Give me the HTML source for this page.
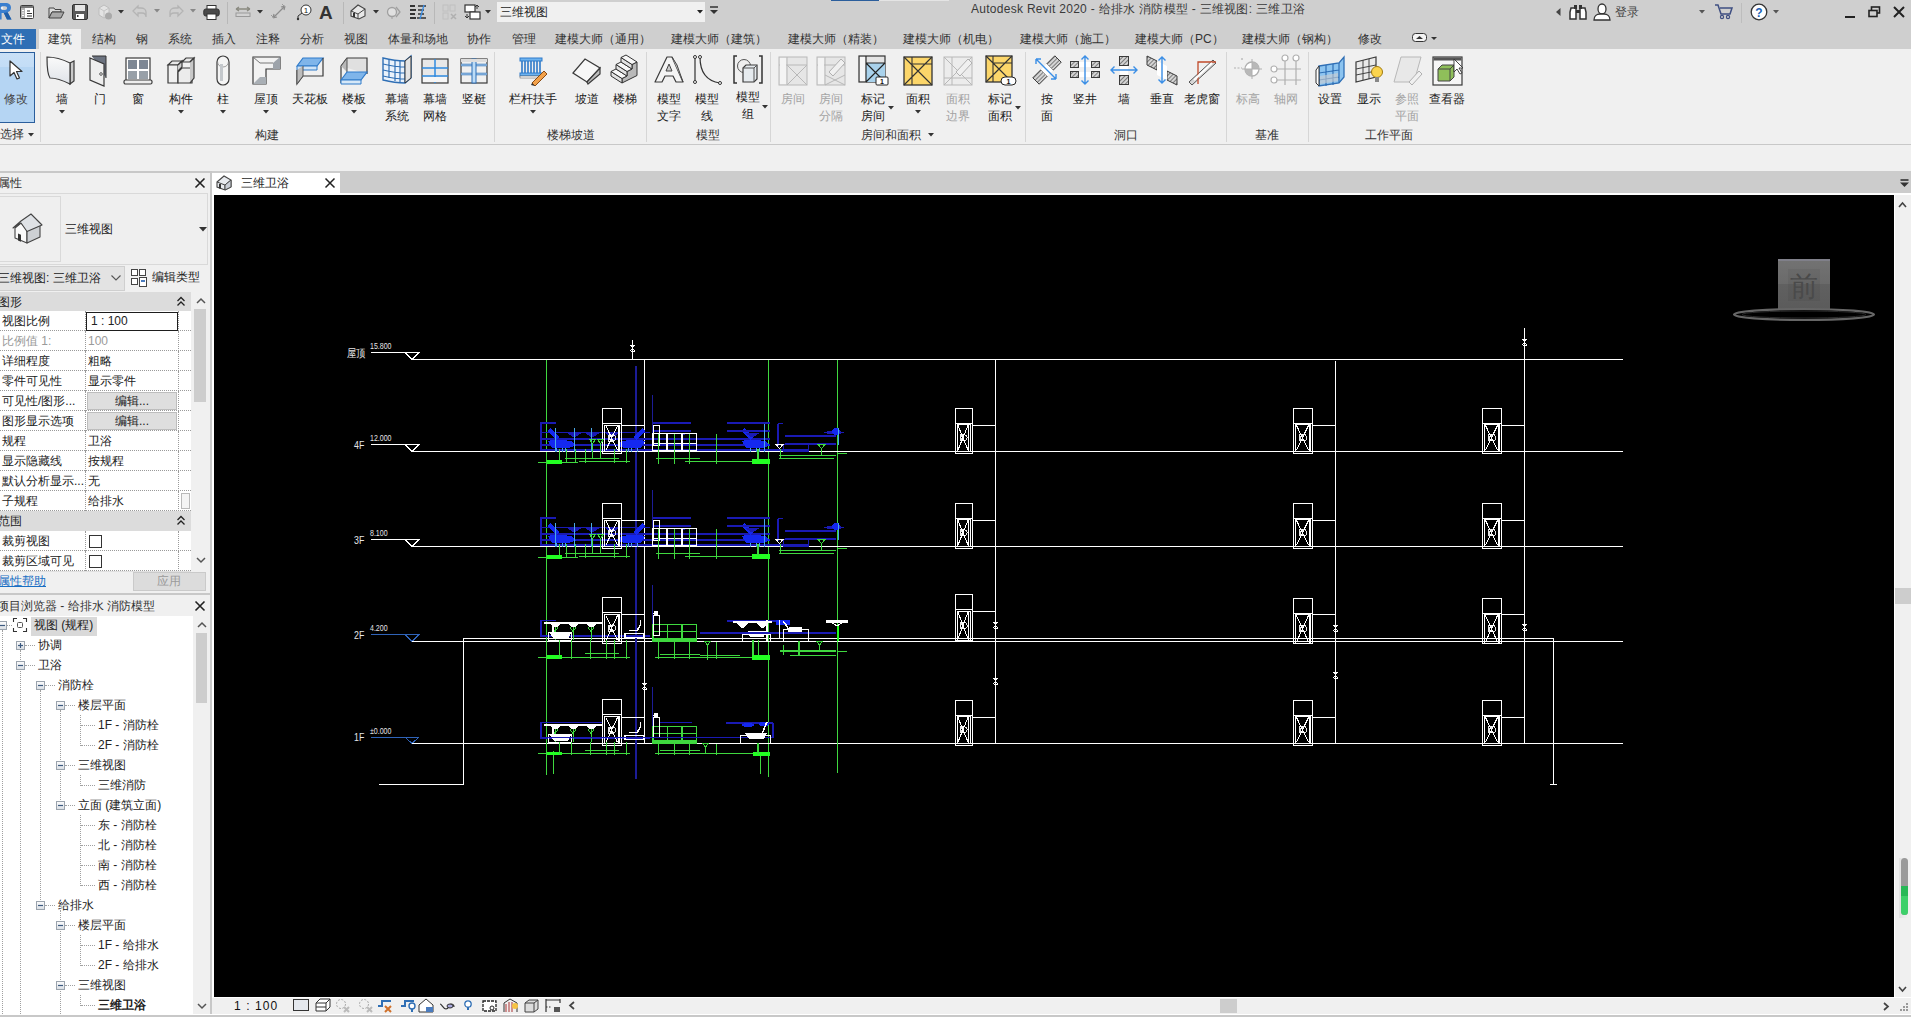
<!DOCTYPE html><html><head><meta charset="utf-8"><style>
html,body{margin:0;padding:0}
body{width:1911px;height:1017px;overflow:hidden;position:relative;background:#f0f0f0;font-family:"Liberation Sans",sans-serif;font-size:12px;color:#1e1e1e}
.t{position:absolute;white-space:nowrap}
svg{overflow:visible}
</style></head><body>
<div style="position:absolute;left:0px;top:0px;width:1911px;height:49px;background:#cfcfcf"></div>
<div style="position:absolute;left:0px;top:29px;width:36px;height:20px;background:#2f6fb5"></div>
<div class="t" style="left:1px;top:31.0px;font-size:12px;line-height:16px;color:#ffffff;">文件</div>
<div style="position:absolute;left:39px;top:29px;width:42px;height:20px;background:#f0f0f0"></div>
<div class="t" style="left:48px;top:31.0px;font-size:12px;line-height:16px;color:#333333;">建筑</div>
<div class="t" style="left:92px;top:31.0px;font-size:12px;line-height:16px;color:#333333;">结构</div>
<div class="t" style="left:136px;top:31.0px;font-size:12px;line-height:16px;color:#333333;">钢</div>
<div class="t" style="left:168px;top:31.0px;font-size:12px;line-height:16px;color:#333333;">系统</div>
<div class="t" style="left:212px;top:31.0px;font-size:12px;line-height:16px;color:#333333;">插入</div>
<div class="t" style="left:256px;top:31.0px;font-size:12px;line-height:16px;color:#333333;">注释</div>
<div class="t" style="left:300px;top:31.0px;font-size:12px;line-height:16px;color:#333333;">分析</div>
<div class="t" style="left:344px;top:31.0px;font-size:12px;line-height:16px;color:#333333;">视图</div>
<div class="t" style="left:388px;top:31.0px;font-size:12px;line-height:16px;color:#333333;">体量和场地</div>
<div class="t" style="left:467px;top:31.0px;font-size:12px;line-height:16px;color:#333333;">协作</div>
<div class="t" style="left:512px;top:31.0px;font-size:12px;line-height:16px;color:#333333;">管理</div>
<div class="t" style="left:555px;top:31.0px;font-size:12px;line-height:16px;color:#333333;">建模大师（通用）</div>
<div class="t" style="left:671px;top:31.0px;font-size:12px;line-height:16px;color:#333333;">建模大师（建筑）</div>
<div class="t" style="left:788px;top:31.0px;font-size:12px;line-height:16px;color:#333333;">建模大师（精装）</div>
<div class="t" style="left:903px;top:31.0px;font-size:12px;line-height:16px;color:#333333;">建模大师（机电）</div>
<div class="t" style="left:1020px;top:31.0px;font-size:12px;line-height:16px;color:#333333;">建模大师（施工）</div>
<div class="t" style="left:1135px;top:31.0px;font-size:12px;line-height:16px;color:#333333;">建模大师（PC）</div>
<div class="t" style="left:1242px;top:31.0px;font-size:12px;line-height:16px;color:#333333;">建模大师（钢构）</div>
<div class="t" style="left:1358px;top:31.0px;font-size:12px;line-height:16px;color:#333333;">修改</div>
<div style="position:absolute;left:831px;top:0px;width:48px;height:1px;background:#2b5e9c"></div>
<div style="position:absolute;left:879px;top:0px;width:70px;height:1px;background:#e4e4e4"></div>
<div class="t" style="left:971px;top:1.0px;font-size:12px;line-height:16px;color:#3a3a3a;letter-spacing:0.28px">Autodesk Revit 2020 - 给排水 消防模型 - 三维视图: 三维卫浴</div>
<svg style="position:absolute;left:-2px;top:3px;" width="14" height="17" viewBox="0 0 14 17"><path d="M0 0h7.5c3.5 0 5.5 2 5.5 4.8 0 2.3-1.4 3.9-3.4 4.5L13.5 16.5H9L5.8 10H3.6v6.5H0Z" fill="#3a7fcf"/><path d="M3.6 3.2v3.8h3.4c1.3 0 2.1-.7 2.1-1.9s-.8-1.9-2.1-1.9Z" fill="#cfcfcf"/><path d="M5.8 10L9 16.5h4.5L9.6 9.3Z" fill="#1f5ea8"/><circle cx="4" cy="5" r="1.3" fill="#e8f0fa"/></svg>
<svg style="position:absolute;left:20px;top:5px;" width="15" height="15" viewBox="0 0 15 15"><rect x="0.5" y="0.5" width="13" height="13" rx="1" fill="#fff" stroke="#3c3c3c"/><rect x="1" y="1" width="12" height="2" fill="#777"/><rect x="1" y="3" width="4" height="10" fill="#b4b4b4"/><path d="M2 5.5h2M2 8h2M2 10.5h2" stroke="#fff"/><path d="M7 6h3M7 8.5h5M7 11h5" stroke="#333"/></svg>
<svg style="position:absolute;left:48px;top:6px;" width="17" height="13" viewBox="0 0 17 13"><path d="M1 2h5l1 1.5h6V6H4L1 12Z" fill="#dcdcdc" stroke="#444"/><path d="M1 12L4 6h12l-3 6Z" fill="#a8a8a8" stroke="#444"/></svg>
<svg style="position:absolute;left:72px;top:4px;" width="16" height="16" viewBox="0 0 16 16"><rect x="0.5" y="0.5" width="15" height="15" rx="1.5" fill="#5a5a5a" stroke="#333"/><rect x="3" y="1" width="10" height="6" fill="#e6e6e6"/><rect x="4" y="10" width="8" height="5" fill="#fff"/><rect x="5" y="11" width="1.5" height="2" fill="#333"/></svg>
<svg style="position:absolute;left:96px;top:4px;" width="17" height="16" viewBox="0 0 17 16"><path d="M3 4l5-3 5 3v7l-5 3-5-3Z" fill="#e3e3e3" stroke="#bdbdbd"/><path d="M3 4l5 3 5-3M8 7v7" stroke="#c4c4c4" fill="none"/><circle cx="12.5" cy="12" r="3.5" fill="#a9a9a9"/></svg>
<svg style="position:absolute;left:118px;top:10px;" width="6" height="4" viewBox="0 0 6 4"><path d="M0 0H6L3 3.5Z" fill="#333"/></svg>
<svg style="position:absolute;left:132px;top:5px;" width="16" height="13" viewBox="0 0 16 13"><path d="M6 1L1 6l5 5V8h4c3 0 4 2 4 4V7c0-2-2-4-5-4H6Z" fill="none" stroke="#b4b4b4" stroke-width="1.3"/></svg>
<svg style="position:absolute;left:154px;top:9px;" width="6" height="4" viewBox="0 0 6 4"><path d="M0 0H6L3 3.5Z" fill="#888"/></svg>
<svg style="position:absolute;left:168px;top:5px;" width="16" height="13" viewBox="0 0 16 13"><path d="M10 1l5 5-5 5V8H6c-3 0-4 2-4 4V7c0-2 2-4 5-4h3Z" fill="none" stroke="#b4b4b4" stroke-width="1.3"/></svg>
<svg style="position:absolute;left:190px;top:9px;" width="6" height="4" viewBox="0 0 6 4"><path d="M0 0H6L3 3.5Z" fill="#888"/></svg>
<svg style="position:absolute;left:203px;top:5px;" width="17" height="15" viewBox="0 0 17 15"><rect x="4" y="0.5" width="9" height="4" fill="#fff" stroke="#333"/><rect x="0.8" y="4" width="15.4" height="7" rx="2" fill="#4a4a4a" stroke="#333"/><rect x="4" y="9" width="9" height="5.5" fill="#fff" stroke="#333"/></svg>
<div style="position:absolute;left:227px;top:2px;width:1px;height:22px;background:#b8b8b8"></div>
<svg style="position:absolute;left:235px;top:6px;" width="16" height="12" viewBox="0 0 16 12"><path d="M1 3h14M1 3l3-2M1 3l3 2M15 3l-3-2M15 3l-3 2" stroke="#8a8a80" fill="none" stroke-width="1.3"/><rect x="1" y="7" width="14" height="3.5" fill="#d2d2d2" stroke="#9a9a9a"/></svg>
<svg style="position:absolute;left:257px;top:10px;" width="6" height="4" viewBox="0 0 6 4"><path d="M0 0H6L3 3.5Z" fill="#333"/></svg>
<svg style="position:absolute;left:271px;top:4px;" width="16" height="16" viewBox="0 0 16 16"><path d="M2 14L14 2M2 14l1-4M2 14l4-1M14 2l-4 1M14 2l-1 4" stroke="#8c8c8c" fill="none" stroke-width="1.2"/><path d="M0 11l3 3M11 0l3 3" stroke="#999" fill="none"/></svg>
<svg style="position:absolute;left:296px;top:4px;" width="16" height="16" viewBox="0 0 16 16"><circle cx="10" cy="6" r="5" fill="#fff" stroke="#333"/><text x="10" y="9" font-size="8" text-anchor="middle" fill="#222" font-family="Liberation Sans">1</text><path d="M6 9L2 12v3" stroke="#333" fill="none"/><circle cx="2" cy="15" r="1.2" fill="#333"/></svg>
<div class="t" style="left:319px;top:0.5px;font-size:19px;line-height:23px;color:#333;font-weight:bold">A</div>
<div style="position:absolute;left:343px;top:2px;width:1px;height:22px;background:#b8b8b8"></div>
<svg style="position:absolute;left:350px;top:4px;" width="16" height="16" viewBox="0 0 16 16"><path d="M1 7L8 1l7 4v7l-6 3-8-3Z" fill="#e8e8e8" stroke="#444" stroke-width="1.1"/><path d="M1 7l7 3 7-5M8 10v5" stroke="#444" fill="none"/><rect x="3" y="9" width="2" height="4" fill="#333"/></svg>
<svg style="position:absolute;left:373px;top:10px;" width="6" height="4" viewBox="0 0 6 4"><path d="M0 0H6L3 3.5Z" fill="#333"/></svg>
<svg style="position:absolute;left:386px;top:5px;" width="15" height="14" viewBox="0 0 15 14"><circle cx="6" cy="7" r="4.5" fill="#e0e0e0" stroke="#a0a0a0" stroke-width="1.3"/><path d="M10 2l4 5-4 5" fill="none" stroke="#a0a0a0" stroke-width="1.3"/><path d="M6 12v2" stroke="#a0a0a0"/></svg>
<svg style="position:absolute;left:410px;top:4px;" width="17" height="16" viewBox="0 0 17 16"><path d="M0 2h5M0 6h6M0 10h5M0 14h6" stroke="#333" stroke-width="2"/><path d="M8 2h8M8 6h6M8 10h6M7 14h9" stroke="#333" stroke-width="1.3"/><path d="M10 15L14 1" stroke="#3a8ee6" stroke-width="1.3"/></svg>
<div style="position:absolute;left:434px;top:2px;width:1px;height:22px;background:#b8b8b8"></div>
<svg style="position:absolute;left:442px;top:4px;" width="16" height="16" viewBox="0 0 16 16"><rect x="1" y="1" width="5" height="6" fill="none" stroke="#c0c0c0"/><rect x="8" y="1" width="5" height="6" fill="none" stroke="#c0c0c0"/><rect x="1" y="9" width="5" height="6" fill="none" stroke="#c0c0c0"/><path d="M9 10l5 5M14 10l-5 5" stroke="#b0b0b0" stroke-width="1.5"/></svg>
<svg style="position:absolute;left:464px;top:4px;" width="17" height="16" viewBox="0 0 17 16"><rect x="1" y="1" width="10" height="7" fill="#fff" stroke="#333" stroke-width="1.2"/><rect x="6" y="8" width="10" height="7" fill="#fff" stroke="#333" stroke-width="1.2"/><path d="M13 1v4M11 3l2-2 2 2M3 10v4M1 12l2 2 2-2" stroke="#333" fill="none"/></svg>
<svg style="position:absolute;left:485px;top:10px;" width="6" height="4" viewBox="0 0 6 4"><path d="M0 0H6L3 3.5Z" fill="#333"/></svg>
<div style="position:absolute;left:497px;top:2px;width:208px;height:20px;background:#f0f0f0"></div>
<div class="t" style="left:500px;top:4.0px;font-size:12px;line-height:16px;color:#1e1e1e;">三维视图</div>
<svg style="position:absolute;left:697px;top:10px;" width="6" height="4" viewBox="0 0 6 4"><path d="M0 0H6L3 3.5Z" fill="#222"/></svg>
<svg style="position:absolute;left:710px;top:6px;" width="8" height="9" viewBox="0 0 8 9"><path d="M0 1h8" stroke="#333" stroke-width="1.5"/><path d="M0 4h8L4 8Z" fill="#333"/></svg>
<svg style="position:absolute;left:1556px;top:8px;" width="5" height="8" viewBox="0 0 5 8"><path d="M4.5 0v8L0 4Z" fill="#444"/></svg>
<svg style="position:absolute;left:1569px;top:4px;" width="18" height="16" viewBox="0 0 18 16"><path d="M2 4h5v11H1V8Z M11 4h5l1 4v7h-6Z" fill="#fff" stroke="#333" stroke-width="1.5"/><rect x="5" y="1" width="3" height="4" fill="#333"/><rect x="10" y="1" width="3" height="4" fill="#333"/><rect x="7" y="6" width="4" height="3" fill="#333"/></svg>
<svg style="position:absolute;left:1593px;top:3px;" width="18" height="18" viewBox="0 0 18 18"><ellipse cx="9" cy="6" rx="4" ry="5" fill="#fff" stroke="#333" stroke-width="1.3"/><path d="M1 17c0-4 3-6 6-6h4c3 0 6 2 6 6Z" fill="#fff" stroke="#333" stroke-width="1.3"/></svg>
<div class="t" style="left:1615px;top:4.0px;font-size:12px;line-height:16px;color:#444;">登录</div>
<svg style="position:absolute;left:1699px;top:10px;" width="6" height="4" viewBox="0 0 6 4"><path d="M0 0H6L3 3.5Z" fill="#555"/></svg>
<svg style="position:absolute;left:1715px;top:4px;" width="18" height="16" viewBox="0 0 18 16"><path d="M0 1h3l3 9h9l2-6H5" fill="none" stroke="#3f4f82" stroke-width="1.5"/><circle cx="7" cy="13" r="1.6" fill="none" stroke="#3f4f82" stroke-width="1.2"/><circle cx="13" cy="13" r="1.6" fill="none" stroke="#3f4f82" stroke-width="1.2"/></svg>
<div style="position:absolute;left:1741px;top:3px;width:1px;height:20px;background:#bdbdbd"></div>
<svg style="position:absolute;left:1750px;top:3px;" width="18" height="18" viewBox="0 0 18 18"><circle cx="9" cy="9" r="7.8" fill="#fff" stroke="#333" stroke-width="1.3"/><text x="9" y="13.5" font-size="12" font-weight="bold" text-anchor="middle" fill="#1b5fb5" font-family="Liberation Sans">?</text></svg>
<svg style="position:absolute;left:1773px;top:10px;" width="6" height="4" viewBox="0 0 6 4"><path d="M0 0H6L3 3.5Z" fill="#555"/></svg>
<div style="position:absolute;left:1845px;top:16px;width:10px;height:2px;background:#222"></div>
<svg style="position:absolute;left:1868px;top:6px;" width="13" height="12" viewBox="0 0 13 12"><rect x="3.5" y="1" width="8" height="6" fill="none" stroke="#222" stroke-width="1.6"/><rect x="1" y="4.5" width="8" height="6" fill="#cfcfcf" stroke="#222" stroke-width="1.6"/></svg>
<svg style="position:absolute;left:1893px;top:6px;" width="12" height="12" viewBox="0 0 12 12"><path d="M1 1l10 10M11 1L1 11" stroke="#222" stroke-width="2"/></svg>
<svg style="position:absolute;left:1412px;top:33px;" width="30" height="10" viewBox="0 0 30 10"><rect x="0.5" y="0.5" width="14" height="8" rx="3" fill="#f4f4f4" stroke="#333"/><path d="M4 6h7L7.5 3Z" fill="#333"/><path d="M19 4h6l-3 3Z" fill="#333"/></svg>
<div style="position:absolute;left:0px;top:49px;width:1911px;height:95px;background:#f0f0f0"></div>
<div style="position:absolute;left:0px;top:144px;width:1911px;height:1px;background:#c8c8c8"></div>
<div style="position:absolute;left:40px;top:52px;width:1px;height:90px;background:#d6d6d6"></div>
<div style="position:absolute;left:494px;top:52px;width:1px;height:90px;background:#d6d6d6"></div>
<div style="position:absolute;left:646px;top:52px;width:1px;height:90px;background:#d6d6d6"></div>
<div style="position:absolute;left:770px;top:52px;width:1px;height:90px;background:#d6d6d6"></div>
<div style="position:absolute;left:1025px;top:52px;width:1px;height:90px;background:#d6d6d6"></div>
<div style="position:absolute;left:1226px;top:52px;width:1px;height:90px;background:#d6d6d6"></div>
<div style="position:absolute;left:1308px;top:52px;width:1px;height:90px;background:#d6d6d6"></div>
<div style="position:absolute;left:0px;top:52px;width:35px;height:71px;background:linear-gradient(#c9e0f7 0%,#c3ddf6 20%,#b5d5f3 21%,#b5d5f3 100%);border:1px solid #2a5e9c;border-left:none;box-sizing:border-box"></div>
<svg style="position:absolute;left:9px;top:60px;" width="14" height="22" viewBox="0 0 14 22"><path d="M1 1v15l4-3.5 3 6.5 2.5-1-3-6.5h5.5Z" fill="#fff" stroke="#333" stroke-width="1.2" stroke-linejoin="round"/></svg>
<div class="t" style="left:-84px;width:200px;text-align:center;top:90.5px;font-size:12px;line-height:16px;color:#444;">修改</div>
<div class="t" style="left:0px;top:126.0px;font-size:12px;line-height:16px;color:#333;">选择</div>
<svg style="position:absolute;left:28px;top:132.5px;" width="6" height="4" viewBox="0 0 6 4"><path d="M0 0H6L3 3.5Z" fill="#333"/></svg>
<svg style="position:absolute;left:46px;top:54px;" width="32" height="32" viewBox="0 0 32 32"><path d="M24 9l4-2v20l-4 3Z" fill="#c9c9c9" stroke="#3a3a3a" stroke-width="1.2"/><path d="M1 3c9 0 17 3 23 6v21c-6-3-13-6-20-6C1 20 1 10 1 3Z" fill="url(#wg)" stroke="#3a3a3a" stroke-width="1.2"/><defs><linearGradient id="wg" x1="0" y1="0" x2="0" y2="1"><stop offset="0" stop-color="#fafafa"/><stop offset="1" stop-color="#dfe3e8"/></linearGradient></defs></svg>
<div class="t" style="left:-38px;width:200px;text-align:center;top:90.5px;font-size:12px;line-height:16px;color:#222222;">墙</div>
<svg style="position:absolute;left:59px;top:109.5px;" width="6" height="4" viewBox="0 0 6 4"><path d="M0 0H6L3 3.5Z" fill="#333"/></svg>
<svg style="position:absolute;left:84px;top:54px;" width="32" height="32" viewBox="0 0 32 32"><path d="M8 2h14v22" fill="#6c7380" stroke="#333"/><path d="M6 4l14 6v22L6 26Z" fill="#eeeeee" stroke="#3a3a3a" stroke-width="1.2"/><circle cx="17" cy="20" r="1.3" fill="#fff" stroke="#555"/></svg>
<div class="t" style="left:0px;width:200px;text-align:center;top:90.5px;font-size:12px;line-height:16px;color:#222222;">门</div>
<svg style="position:absolute;left:122px;top:54px;" width="32" height="32" viewBox="0 0 32 32"><rect x="4" y="4" width="24" height="23" fill="#fff" stroke="#3a3a3a" stroke-width="1.2"/><rect x="6" y="6" width="9" height="9" fill="#7d8794"/><rect x="17" y="6" width="9" height="9" fill="#7d8794"/><rect x="6" y="17" width="9" height="8" fill="#98a0a8"/><rect x="17" y="17" width="9" height="8" fill="#98a0a8"/><rect x="2" y="26" width="28" height="4" rx="1.5" fill="#eee" stroke="#3a3a3a" stroke-width="1.2"/></svg>
<div class="t" style="left:38px;width:200px;text-align:center;top:90.5px;font-size:12px;line-height:16px;color:#222222;">窗</div>
<svg style="position:absolute;left:165px;top:54px;" width="32" height="32" viewBox="0 0 32 32"><path d="M3 11l4-4h10l-4 4Z" fill="#e8e8e8" stroke="#3a3a3a" stroke-width="1.2"/><path d="M3 11h10v18H3Z" fill="#f0f0f0" stroke="#3a3a3a" stroke-width="1.2"/><path d="M13 11l4-4v6l-4 4" fill="#d0d0d0" stroke="#3a3a3a" stroke-width="1.2"/><path d="M13 18l4-4h10v15H13Z" fill="#ececec" stroke="#3a3a3a" stroke-width="1.2"/><path d="M17 8l4-4h8l-4 4Z" fill="#e8e8e8" stroke="#3a3a3a" stroke-width="1.2"/><path d="M25 8l4-4v20l-4 5" fill="#c8c8c8" stroke="#3a3a3a" stroke-width="1.2"/></svg>
<div class="t" style="left:81px;width:200px;text-align:center;top:90.5px;font-size:12px;line-height:16px;color:#222222;">构件</div>
<svg style="position:absolute;left:178px;top:109.5px;" width="6" height="4" viewBox="0 0 6 4"><path d="M0 0H6L3 3.5Z" fill="#333"/></svg>
<svg style="position:absolute;left:207px;top:54px;" width="32" height="32" viewBox="0 0 32 32"><rect x="10" y="2" width="12" height="29" rx="6" fill="#f4f4f4" stroke="#3a3a3a" stroke-width="1.2"/><path d="M10.6 8a5.4 5 0 0 0 10.8 0" fill="none" stroke="#888" stroke-width="0.8"/><rect x="13" y="10" width="3" height="17" fill="#c4c8cc"/></svg>
<div class="t" style="left:123px;width:200px;text-align:center;top:90.5px;font-size:12px;line-height:16px;color:#222222;">柱</div>
<svg style="position:absolute;left:220px;top:109.5px;" width="6" height="4" viewBox="0 0 6 4"><path d="M0 0H6L3 3.5Z" fill="#333"/></svg>
<svg style="position:absolute;left:250px;top:54px;" width="32" height="32" viewBox="0 0 32 32"><path d="M3 3h27v12H16v15H3Z" fill="#f2f2f2" stroke="#3a3a3a" stroke-width="1.2"/><path d="M30 3l-7 6v6h7Z" fill="#9da3aa"/><path d="M3 30l7-7h6v7Z" fill="#a9afb5"/><path d="M3 3l7 6h13" fill="none" stroke="#777"/></svg>
<div class="t" style="left:166px;width:200px;text-align:center;top:90.5px;font-size:12px;line-height:16px;color:#222222;">屋顶</div>
<svg style="position:absolute;left:263px;top:109.5px;" width="6" height="4" viewBox="0 0 6 4"><path d="M0 0H6L3 3.5Z" fill="#333"/></svg>
<svg style="position:absolute;left:294px;top:54px;" width="32" height="32" viewBox="0 0 32 32"><path d="M3 12l6-8h20l-6 8Z" fill="#7fb5ea" stroke="#2f7ac9" stroke-width="1.2"/><path d="M3 12h20v4H3Z" fill="#cfe3f6" stroke="#2f7ac9"/><path d="M3 16v14l6-8h20V4" fill="none" stroke="#3a3a3a" stroke-width="1.2"/><path d="M3 16v14l6-8V12" fill="#bdbdbd" stroke="#555"/></svg>
<div class="t" style="left:210px;width:200px;text-align:center;top:90.5px;font-size:12px;line-height:16px;color:#222222;">天花板</div>
<svg style="position:absolute;left:338px;top:54px;" width="32" height="32" viewBox="0 0 32 32"><path d="M3 12l6-8h20v16" fill="#e0e0e0" stroke="#3a3a3a" stroke-width="1.2"/><path d="M3 12v17" stroke="#3a3a3a" stroke-width="1.2"/><path d="M3 12l6-8v14" fill="#b8b8b8" stroke="#555"/><path d="M3 26l6-8h20l-6 8Z" fill="#7fb5ea" stroke="#2f7ac9" stroke-width="1.2"/><path d="M3 26h20v4H3Z" fill="#d6e8f8" stroke="#2f7ac9"/></svg>
<div class="t" style="left:254px;width:200px;text-align:center;top:90.5px;font-size:12px;line-height:16px;color:#222222;">楼板</div>
<svg style="position:absolute;left:351px;top:109.5px;" width="6" height="4" viewBox="0 0 6 4"><path d="M0 0H6L3 3.5Z" fill="#333"/></svg>
<svg style="position:absolute;left:381px;top:54px;" width="32" height="32" viewBox="0 0 32 32"><path d="M2 4c8 2 14 3 22 3l6-5v22l-6 5c-8 0-14-1-22-3Z" fill="#eaf2fb" stroke="#2f6fb5" stroke-width="1.4"/><path d="M24 7v22M2 10c8 2 14 3 22 3M2 16c8 2 14 3 22 3M2 22c8 2 14 3 22 3M8 5v19M14 6v21M19 7v21" fill="none" stroke="#2f6fb5" stroke-width="1.2"/><path d="M24 7l6-5v22l-6 5Z" fill="#e4e4e4" stroke="#333"/></svg>
<div class="t" style="left:297px;width:200px;text-align:center;top:90.5px;font-size:12px;line-height:16px;color:#222222;">幕墙</div>
<div class="t" style="left:297px;width:200px;text-align:center;top:107.5px;font-size:12px;line-height:16px;color:#222222;">系统</div>
<svg style="position:absolute;left:419px;top:54px;" width="32" height="32" viewBox="0 0 32 32"><rect x="3" y="5" width="26" height="24" fill="#e8e8e8" stroke="#3a3a3a" stroke-width="1.2"/><path d="M3 14h26M3 22h26M16 5v24" stroke="#2f8ae0" stroke-width="1.5"/><rect x="4" y="23" width="24" height="5" fill="#f6f6f6"/></svg>
<div class="t" style="left:335px;width:200px;text-align:center;top:90.5px;font-size:12px;line-height:16px;color:#222222;">幕墙</div>
<div class="t" style="left:335px;width:200px;text-align:center;top:107.5px;font-size:12px;line-height:16px;color:#222222;">网格</div>
<svg style="position:absolute;left:458px;top:54px;" width="32" height="32" viewBox="0 0 32 32"><rect x="3" y="5" width="26" height="24" fill="#f0f0f0" stroke="#3a3a3a" stroke-width="1.2"/><path d="M3 11h26M3 20h26" stroke="#2f6fb5" stroke-width="2.5"/><path d="M3 11h26M3 20h26" stroke="#bcdcf7" stroke-width="1"/><rect x="14" y="5" width="4" height="24" fill="#bcdcf7" stroke="#2f6fb5"/><rect x="3" y="5" width="26" height="3" fill="#ddd"/></svg>
<div class="t" style="left:374px;width:200px;text-align:center;top:90.5px;font-size:12px;line-height:16px;color:#222222;">竖梃</div>
<div class="t" style="left:167px;width:200px;text-align:center;top:126.5px;font-size:12px;line-height:16px;color:#333;">构建</div>
<svg style="position:absolute;left:517px;top:54px;" width="32" height="32" viewBox="0 0 32 32"><rect x="3" y="4" width="22" height="3" fill="#6db3f0" stroke="#2f7ac9"/><rect x="3" y="19" width="22" height="3" fill="#6db3f0" stroke="#2f7ac9"/><path d="M5 7v12M8 7v12M11 7v12M14 7v12M17 7v12M20 7v12M23 7v12" stroke="#2f7ac9" stroke-width="1.6"/><rect x="3" y="22" width="22" height="2" fill="#fff" stroke="#666" stroke-width="0.6"/><path d="M15 29l12-12 3 3-12 12Z" fill="#f2a14a" stroke="#8a4a12"/><path d="M14 31l1-2 3 3Z" fill="#333"/></svg>
<div class="t" style="left:433px;width:200px;text-align:center;top:90.5px;font-size:12px;line-height:16px;color:#222222;">栏杆扶手</div>
<svg style="position:absolute;left:530px;top:109.5px;" width="6" height="4" viewBox="0 0 6 4"><path d="M0 0H6L3 3.5Z" fill="#333"/></svg>
<svg style="position:absolute;left:571px;top:54px;" width="32" height="32" viewBox="0 0 32 32"><path d="M2 19l12-14 15 9-13 14Z" fill="#f7f7f7" stroke="#3a3a3a" stroke-width="1.2"/><path d="M16 28l13-14v6L17 30Z" fill="#bdbdbd" stroke="#3a3a3a" stroke-width="1.2"/></svg>
<div class="t" style="left:487px;width:200px;text-align:center;top:90.5px;font-size:12px;line-height:16px;color:#222222;">坡道</div>
<svg style="position:absolute;left:609px;top:54px;" width="32" height="32" viewBox="0 0 32 32"><path d="M13.0 29.0 L13.0 24.5 L18.0 22.0 L18.0 17.5 L23.0 15.0 L23.0 10.5 L28.0 8.0 L28.0 21.5Z" fill="#b9b9b9" stroke="#333" stroke-width="1" stroke-linejoin="round"/><path d="M2.0 22.0 L2.0 17.5 L13.0 24.5 L13.0 29.0Z" fill="#e2e2e2" stroke="#333" stroke-width="1" stroke-linejoin="round"/><path d="M2.0 17.5 L7.0 15.0 L18.0 22.0 L13.0 24.5Z" fill="#f8f8f8" stroke="#333" stroke-width="1" stroke-linejoin="round"/><path d="M7.0 15.0 L7.0 10.5 L18.0 17.5 L18.0 22.0Z" fill="#e2e2e2" stroke="#333" stroke-width="1" stroke-linejoin="round"/><path d="M7.0 10.5 L12.0 8.0 L23.0 15.0 L18.0 17.5Z" fill="#f8f8f8" stroke="#333" stroke-width="1" stroke-linejoin="round"/><path d="M12.0 8.0 L12.0 3.5 L23.0 10.5 L23.0 15.0Z" fill="#e2e2e2" stroke="#333" stroke-width="1" stroke-linejoin="round"/><path d="M12.0 3.5 L17.0 1.0 L28.0 8.0 L23.0 10.5Z" fill="#f8f8f8" stroke="#333" stroke-width="1" stroke-linejoin="round"/></svg>
<div class="t" style="left:525px;width:200px;text-align:center;top:90.5px;font-size:12px;line-height:16px;color:#222222;">楼梯</div>
<div class="t" style="left:471px;width:200px;text-align:center;top:126.5px;font-size:12px;line-height:16px;color:#333;">楼梯坡道</div>
<svg style="position:absolute;left:653px;top:54px;" width="32" height="32" viewBox="0 0 32 32"><path d="M2 28L14 3h5l11 25h-7l-3-6h-8l-3 6Z" fill="#f4f4f4" stroke="#3a3a3a" stroke-width="1.2" stroke-linejoin="round"/><path d="M13 17l3-7 3 7Z" fill="#ccc" stroke="#444"/><path d="M19 3l5 8 6 17" fill="#c0c0c0" stroke="#444"/></svg>
<div class="t" style="left:569px;width:200px;text-align:center;top:90.5px;font-size:12px;line-height:16px;color:#222222;">模型</div>
<div class="t" style="left:569px;width:200px;text-align:center;top:107.5px;font-size:12px;line-height:16px;color:#222222;">文字</div>
<svg style="position:absolute;left:691px;top:54px;" width="32" height="32" viewBox="0 0 32 32"><path d="M4 3v25M9 3c0 14 6 24 20 26" fill="none" stroke="#333" stroke-width="1.2"/><circle cx="4" cy="3" r="1.5" fill="#fff" stroke="#333"/><circle cx="4" cy="28" r="1.5" fill="#fff" stroke="#333"/><circle cx="9" cy="3" r="1.5" fill="#fff" stroke="#333"/><circle cx="29" cy="29" r="1.5" fill="#fff" stroke="#333"/></svg>
<div class="t" style="left:607px;width:200px;text-align:center;top:90.5px;font-size:12px;line-height:16px;color:#222222;">模型</div>
<div class="t" style="left:607px;width:200px;text-align:center;top:107.5px;font-size:12px;line-height:16px;color:#222222;">线</div>
<div class="t" style="left:648px;width:200px;text-align:center;top:89.0px;font-size:12px;line-height:16px;color:#222;">模型</div>
<div class="t" style="left:648px;width:200px;text-align:center;top:106.0px;font-size:12px;line-height:16px;color:#222;">组</div>
<svg style="position:absolute;left:732px;top:54px;" width="32" height="32" viewBox="0 0 32 32"><path d="M5 2H2v27h3M27 2h3v27h-3" fill="none" stroke="#333" stroke-width="1.5"/><circle cx="12" cy="12" r="6.5" fill="#efefef" stroke="#555"/><path d="M11 14l3-3h11v14l-3 3H11Z" fill="#e6ebef" stroke="#3a3a3a" stroke-width="1.2"/><path d="M11 14h11v14M22 14l3-3" fill="none" stroke="#555"/></svg>
<svg style="position:absolute;left:762px;top:104.5px;" width="6" height="4" viewBox="0 0 6 4"><path d="M0 0H6L3 3.5Z" fill="#333"/></svg>
<div class="t" style="left:608px;width:200px;text-align:center;top:126.5px;font-size:12px;line-height:16px;color:#333;">模型</div>
<svg style="position:absolute;left:777px;top:54px;" width="32" height="32" viewBox="0 0 32 32"><rect x="2" y="3" width="28" height="28" fill="#e6e6e6" stroke="#b8b8b8" stroke-width="1"/><path d="M2 11h28M10 3v28M10 11l20 20M30 11L10 31" fill="none" stroke="#b8b8b8" stroke-width="1"/><rect x="3" y="4" width="6" height="26" fill="#f4f4f4"/></svg>
<div class="t" style="left:693px;width:200px;text-align:center;top:90.5px;font-size:12px;line-height:16px;color:#a3a3a3;">房间</div>
<svg style="position:absolute;left:815px;top:54px;" width="32" height="32" viewBox="0 0 32 32"><rect x="2" y="3" width="28" height="28" fill="#e6e6e6" stroke="#b8b8b8" stroke-width="1"/><path d="M2 11h28M10 3v28M10 21l20 10M30 21L10 31" fill="none" stroke="#b8b8b8" stroke-width="1"/><rect x="3" y="4" width="6" height="26" fill="#f4f4f4"/><path d="M14 18l12-13 4 4-12 13Z" fill="#f0f0f0" stroke="#b0b0b0"/></svg>
<div class="t" style="left:731px;width:200px;text-align:center;top:90.5px;font-size:12px;line-height:16px;color:#a3a3a3;">房间</div>
<div class="t" style="left:731px;width:200px;text-align:center;top:107.5px;font-size:12px;line-height:16px;color:#a3a3a3;">分隔</div>
<svg style="position:absolute;left:857px;top:54px;" width="32" height="32" viewBox="0 0 32 32"><rect x="2" y="2" width="26" height="26" fill="#e4e4e4" stroke="#333" stroke-width="1.2"/><rect x="9" y="9" width="19" height="19" fill="#a9d2ec"/><path d="M9 2v26M9 9h19M9 9l19 19M28 9L9 28" fill="none" stroke="#222" stroke-width="1.1"/><rect x="3" y="3" width="5" height="24" fill="#f6f6f6"/><rect x="19" y="23" width="12" height="8" rx="1" fill="#fff" stroke="#222"/><text x="25" y="30" font-size="7" font-weight="bold" text-anchor="middle" fill="#111" font-family="Liberation Sans">1</text></svg>
<div class="t" style="left:773px;width:200px;text-align:center;top:90.5px;font-size:12px;line-height:16px;color:#222222;">标记</div>
<div class="t" style="left:773px;width:200px;text-align:center;top:107.5px;font-size:12px;line-height:16px;color:#222222;">房间</div>
<svg style="position:absolute;left:888px;top:105.5px;" width="6" height="4" viewBox="0 0 6 4"><path d="M0 0H6L3 3.5Z" fill="#333"/></svg>
<svg style="position:absolute;left:902px;top:54px;" width="32" height="32" viewBox="0 0 32 32"><rect x="2" y="3" width="28" height="28" fill="#fcd66a" stroke="#333" stroke-width="1.3"/><path d="M2 3l28 28M30 3L2 31M10 3v28M10 10h20" fill="none" stroke="#333" stroke-width="1.1"/></svg>
<div class="t" style="left:818px;width:200px;text-align:center;top:90.5px;font-size:12px;line-height:16px;color:#222222;">面积</div>
<svg style="position:absolute;left:915px;top:109.5px;" width="6" height="4" viewBox="0 0 6 4"><path d="M0 0H6L3 3.5Z" fill="#333"/></svg>
<svg style="position:absolute;left:942px;top:54px;" width="32" height="32" viewBox="0 0 32 32"><rect x="2" y="3" width="28" height="28" fill="#ececec" stroke="#b8b8b8" stroke-width="1"/><path d="M2 3l28 28M30 3L2 31M10 3v28M2 24h28" fill="none" stroke="#b8b8b8" stroke-width="1"/><path d="M14 18l12-13 4 4-12 13Z" fill="#f0f0f0" stroke="#b0b0b0"/></svg>
<div class="t" style="left:858px;width:200px;text-align:center;top:90.5px;font-size:12px;line-height:16px;color:#a3a3a3;">面积</div>
<div class="t" style="left:858px;width:200px;text-align:center;top:107.5px;font-size:12px;line-height:16px;color:#a3a3a3;">边界</div>
<svg style="position:absolute;left:984px;top:54px;" width="32" height="32" viewBox="0 0 32 32"><rect x="2" y="2" width="26" height="26" fill="#fcd66a" stroke="#333" stroke-width="1.3"/><path d="M2 2l26 26M28 2L2 28M9 2v26M9 9h19" fill="none" stroke="#333" stroke-width="1.1"/><rect x="17" y="23" width="15" height="8" rx="4" fill="#fff" stroke="#222"/><text x="24.5" y="30" font-size="7" font-weight="bold" text-anchor="middle" fill="#111" font-family="Liberation Sans">1</text></svg>
<div class="t" style="left:900px;width:200px;text-align:center;top:90.5px;font-size:12px;line-height:16px;color:#222222;">标记</div>
<div class="t" style="left:900px;width:200px;text-align:center;top:107.5px;font-size:12px;line-height:16px;color:#222222;">面积</div>
<svg style="position:absolute;left:1015px;top:105.5px;" width="6" height="4" viewBox="0 0 6 4"><path d="M0 0H6L3 3.5Z" fill="#333"/></svg>
<div class="t" style="left:861px;top:126.5px;font-size:12px;line-height:16px;color:#333;">房间和面积</div>
<svg style="position:absolute;left:928px;top:132.5px;" width="6" height="4" viewBox="0 0 6 4"><path d="M0 0H6L3 3.5Z" fill="#333"/></svg>
<svg style="position:absolute;left:1031px;top:54px;" width="32" height="32" viewBox="0 0 32 32"><defs><pattern id="hp1" width="3" height="3" patternUnits="userSpaceOnUse" patternTransform="rotate(45)"><rect width="3" height="3" fill="#d4d4d4"/><rect width="1" height="3" fill="#7a7a7a"/></pattern></defs><path d="M1.8 23.8L9.8 15.8 16.2 22.2 8.2 30.2Z" fill="url(#hp1)" stroke="#3a3a3a" stroke-width="1"/><path d="M15.8 9.8L23.8 1.8 30.2 8.2 22.2 16.2Z" fill="url(#hp1)" stroke="#3a3a3a" stroke-width="1"/><path d="M9.8 15.8L15.8 9.8 22.2 16.2 16.2 22.2Z" fill="#fff"/><path d="M5 5l20 20M5 5v5M5 5h5M25 25v-5M25 25h-5" fill="none" stroke="#3a8ee6" stroke-width="1.4"/></svg>
<div class="t" style="left:947px;width:200px;text-align:center;top:90.5px;font-size:12px;line-height:16px;color:#222222;">按</div>
<div class="t" style="left:947px;width:200px;text-align:center;top:107.5px;font-size:12px;line-height:16px;color:#222222;">面</div>
<svg style="position:absolute;left:1069px;top:54px;" width="32" height="32" viewBox="0 0 32 32"><defs><pattern id="hp2" width="3" height="3" patternUnits="userSpaceOnUse" patternTransform="rotate(45)"><rect width="3" height="3" fill="#d4d4d4"/><rect width="1" height="3" fill="#7a7a7a"/></pattern></defs><rect x="1.5" y="7.5" width="8" height="6" fill="url(#hp2)" stroke="#3a3a3a" stroke-width="1"/><rect x="22.5" y="7.5" width="8" height="6" fill="url(#hp2)" stroke="#3a3a3a" stroke-width="1"/><rect x="1.5" y="17.5" width="8" height="6" fill="url(#hp2)" stroke="#3a3a3a" stroke-width="1"/><rect x="22.5" y="17.5" width="8" height="6" fill="url(#hp2)" stroke="#3a3a3a" stroke-width="1"/><rect x="10" y="8" width="12" height="5" fill="#fff"/><rect x="10" y="18" width="12" height="5" fill="#fff"/><path d="M16 2v28M12.5 5.5L16 2l3.5 3.5M12.5 26.5L16 30l3.5-3.5" fill="none" stroke="#3a8ee6" stroke-width="1.4"/></svg>
<div class="t" style="left:985px;width:200px;text-align:center;top:90.5px;font-size:12px;line-height:16px;color:#222222;">竖井</div>
<svg style="position:absolute;left:1108px;top:54px;" width="32" height="32" viewBox="0 0 32 32"><defs><pattern id="hp3" width="3" height="3" patternUnits="userSpaceOnUse" patternTransform="rotate(45)"><rect width="3" height="3" fill="#d4d4d4"/><rect width="1" height="3" fill="#7a7a7a"/></pattern></defs><rect x="11.5" y="2.5" width="9" height="9" fill="url(#hp3)" stroke="#3a3a3a" stroke-width="1"/><rect x="11.5" y="21.5" width="9" height="9" fill="url(#hp3)" stroke="#3a3a3a" stroke-width="1"/><rect x="12" y="12" width="8" height="9" fill="#fff"/><path d="M3 16h26M6.5 12.5L3 16l3.5 3.5M25.5 12.5L29 16l-3.5 3.5" fill="none" stroke="#3a8ee6" stroke-width="1.4"/></svg>
<div class="t" style="left:1024px;width:200px;text-align:center;top:90.5px;font-size:12px;line-height:16px;color:#222222;">墙</div>
<svg style="position:absolute;left:1146px;top:54px;" width="32" height="32" viewBox="0 0 32 32"><defs><pattern id="hp4" width="3" height="3" patternUnits="userSpaceOnUse" patternTransform="rotate(45)"><rect width="3" height="3" fill="#d4d4d4"/><rect width="1" height="3" fill="#7a7a7a"/></pattern></defs><path d="M1 2l10 5v9L1 11Z" fill="url(#hp4)" stroke="#3a3a3a" stroke-width="1"/><path d="M21 17l10 5v9l-10-5Z" fill="url(#hp4)" stroke="#3a3a3a" stroke-width="1"/><path d="M11 7l10 5v14l-10-5Z" fill="#fff"/><path d="M16 3v26M12.5 6.5L16 3l3.5 3.5M12.5 25.5L16 29l3.5-3.5" fill="none" stroke="#3a8ee6" stroke-width="1.4"/></svg>
<div class="t" style="left:1062px;width:200px;text-align:center;top:90.5px;font-size:12px;line-height:16px;color:#222222;">垂直</div>
<svg style="position:absolute;left:1186px;top:54px;" width="32" height="32" viewBox="0 0 32 32"><path d="M3 28L27 6l3 3L6 31Z" fill="#d6d6d6" stroke="#555"/><path d="M12 30V8h18" fill="none" stroke="#c04a2a" stroke-width="1.3"/><path d="M8 26l18-17" stroke="#fff" stroke-width="2"/></svg>
<div class="t" style="left:1102px;width:200px;text-align:center;top:90.5px;font-size:12px;line-height:16px;color:#222222;">老虎窗</div>
<div class="t" style="left:1026px;width:200px;text-align:center;top:126.5px;font-size:12px;line-height:16px;color:#333;">洞口</div>
<svg style="position:absolute;left:1232px;top:54px;" width="32" height="32" viewBox="0 0 32 32"><path d="M2 14h8M10 4v3" stroke="#b0b0b0" stroke-width="1.2" stroke-dasharray="2 1.5"/><circle cx="20" cy="15" r="7" fill="#fff" stroke="#b0b0b0" stroke-width="1.3"/><path d="M20 15V8a7 7 0 0 1 7 7Z M20 15v7a7 7 0 0 1-7-7Z" fill="#b8b8b8"/><path d="M20 5v20M10 15h20" stroke="#b0b0b0"/></svg>
<div class="t" style="left:1148px;width:200px;text-align:center;top:90.5px;font-size:12px;line-height:16px;color:#a3a3a3;">标高</div>
<svg style="position:absolute;left:1270px;top:54px;" width="32" height="32" viewBox="0 0 32 32"><circle cx="15" cy="4" r="3" fill="#fff" stroke="#b0b0b0" stroke-width="1.2"/><circle cx="26" cy="4" r="3" fill="#fff" stroke="#b0b0b0" stroke-width="1.2"/><circle cx="4" cy="15" r="3" fill="#fff" stroke="#b0b0b0" stroke-width="1.2"/><circle cx="4" cy="26" r="3" fill="#fff" stroke="#b0b0b0" stroke-width="1.2"/><path d="M15 7v24M26 7v24M7 15h24M7 26h24" stroke="#b0b0b0" stroke-width="1.2"/></svg>
<div class="t" style="left:1186px;width:200px;text-align:center;top:90.5px;font-size:12px;line-height:16px;color:#a3a3a3;">轴网</div>
<div class="t" style="left:1167px;width:200px;text-align:center;top:126.5px;font-size:12px;line-height:16px;color:#333;">基准</div>
<svg style="position:absolute;left:1314px;top:54px;" width="32" height="32" viewBox="0 0 32 32"><path d="M5 12l20-3 5-6v20l-5 6-20 3Z" fill="#8cc4f0" stroke="#2f6fb5" stroke-width="1.3"/><path d="M12 11v21M19 10v21M5 19l20-3M5 26l20-3M25 9v20" stroke="#2f6fb5" stroke-width="1.2"/><path d="M2 16l3-4v20l-3-3Z" fill="#fff" stroke="#333"/><path d="M6 22l18-3v8L6 30Z" fill="#cfcfcf" opacity="0.6"/></svg>
<div class="t" style="left:1230px;width:200px;text-align:center;top:90.5px;font-size:12px;line-height:16px;color:#222222;">设置</div>
<svg style="position:absolute;left:1353px;top:54px;" width="32" height="32" viewBox="0 0 32 32"><path d="M3 8l20-5v20L3 28Z" fill="#eaeaea" stroke="#3a3a3a" stroke-width="1.2"/><path d="M10 6v20M16 5v20M3 15l20-4M3 21l20-4" stroke="#444"/><circle cx="24" cy="18" r="5.5" fill="#fbd44e" stroke="#a07a10"/><rect x="22" y="23" width="4" height="5" fill="#888"/></svg>
<div class="t" style="left:1269px;width:200px;text-align:center;top:90.5px;font-size:12px;line-height:16px;color:#222222;">显示</div>
<svg style="position:absolute;left:1391px;top:54px;" width="32" height="32" viewBox="0 0 32 32"><path d="M3 28L10 3h20l-7 25Z" fill="#e8e8e8" stroke="#b8b8b8"/><path d="M18 28l10-11 3 3-10 11Z" fill="#f0f0f0" stroke="#b0b0b0"/></svg>
<div class="t" style="left:1307px;width:200px;text-align:center;top:90.5px;font-size:12px;line-height:16px;color:#a3a3a3;">参照</div>
<div class="t" style="left:1307px;width:200px;text-align:center;top:107.5px;font-size:12px;line-height:16px;color:#a3a3a3;">平面</div>
<svg style="position:absolute;left:1431px;top:54px;" width="32" height="32" viewBox="0 0 32 32"><rect x="2" y="3" width="29" height="28" fill="#f6f6f6" stroke="#3a3a3a" stroke-width="1.2"/><rect x="2.5" y="3.5" width="28" height="3" fill="#555"/><path d="M7 15l4-4h12v12l-4 4H7Z" fill="#8fbf5a" stroke="#444"/><path d="M7 15h12v12M19 15l4-4" fill="none" stroke="#444"/><path d="M23 5v13l3-3 3 5 2-1-3-5h4Z" fill="#fff" stroke="#333" stroke-width="0.9"/></svg>
<div class="t" style="left:1347px;width:200px;text-align:center;top:90.5px;font-size:12px;line-height:16px;color:#222222;">查看器</div>
<div class="t" style="left:1289px;width:200px;text-align:center;top:126.5px;font-size:12px;line-height:16px;color:#333;">工作平面</div>
<div class="t" style="left:-2px;top:174.5px;font-size:12px;line-height:16px;color:#333;">属性</div>
<svg style="position:absolute;left:195px;top:178px;" width="10" height="10" viewBox="0 0 10 10"><path d="M0.5 0.5l9 9M9.5 0.5l-9 9" stroke="#222" stroke-width="1.6"/></svg>
<div style="position:absolute;left:0px;top:193px;width:208px;height:72px;border:1px solid #d9d9d9;border-left:none;box-sizing:border-box;background:#efefef"></div>
<div style="position:absolute;left:0px;top:196px;width:61px;height:66px;border:1px solid #d9d9d9;border-left:none;box-sizing:border-box;background:#efefef"></div>
<svg style="position:absolute;left:12px;top:213px;" width="32" height="31" viewBox="0 0 32 31"><path d="M3 15L9 10l6 7v13L3 25Z" fill="#fafafa" stroke="#444" stroke-width="1.1" stroke-linejoin="round"/><path d="M15 17l13-5v12l-13 6Z" fill="#cdd0d4" stroke="#444" stroke-width="1.1" stroke-linejoin="round"/><path d="M1 15L9 8 19 1l11 11-15 6.5L9 10Z" fill="#dfe2e6" stroke="#444" stroke-width="1.1" stroke-linejoin="round"/><path d="M6 20.5l3 1.2v7l-3-1.2Z" fill="#333"/></svg>
<div class="t" style="left:65px;top:221.0px;font-size:12px;line-height:16px;color:#222;">三维视图</div>
<svg style="position:absolute;left:199px;top:227px;" width="8" height="5" viewBox="0 0 8 5"><path d="M0 0h8L4 4.5Z" fill="#333"/></svg>
<div style="position:absolute;left:0px;top:266px;width:125px;height:25px;background:#e3e3e3;border:1px solid #cfcfcf;border-left:none;box-sizing:border-box"></div>
<div class="t" style="left:-2px;top:270.0px;font-size:12px;line-height:16px;color:#222;">三维视图: 三维卫浴</div>
<svg style="position:absolute;left:111px;top:275px;" width="10" height="6" viewBox="0 0 10 6"><path d="M0.5 0.5l4.5 4.5 4.5-4.5" fill="none" stroke="#555" stroke-width="1.1"/></svg>
<svg style="position:absolute;left:131px;top:269px;" width="17" height="18" viewBox="0 0 17 18"><rect x="0.5" y="0.5" width="6" height="6" fill="#fff" stroke="#444"/><rect x="8.5" y="0.5" width="6" height="6" fill="#fff" stroke="#444"/><rect x="0.5" y="9.5" width="6" height="6" fill="#fff" stroke="#444"/><rect x="8.5" y="8.5" width="7" height="9" fill="#fff" stroke="#444"/><rect x="10" y="11" width="4" height="2" fill="#4a7bbd"/></svg>
<div class="t" style="left:152px;top:269.0px;font-size:12px;line-height:16px;color:#222;">编辑类型</div>
<div style="position:absolute;left:0px;top:292px;width:191px;height:19px;background:#dcdcdc"></div>
<div class="t" style="left:-2px;top:293.5px;font-size:12px;line-height:16px;color:#222;">图形</div>
<svg style="position:absolute;left:177px;top:296px;" width="8" height="11" viewBox="0 0 8 11"><path d="M0.5 5l3.5-3.5 3.5 3.5M0.5 9.5l3.5-3.5 3.5 3.5" fill="none" stroke="#222" stroke-width="1.3"/></svg>
<div style="position:absolute;left:191px;top:292px;width:19px;height:280px;background:#f0f0f0"></div>
<svg style="position:absolute;left:196px;top:297px;" width="10" height="7" viewBox="0 0 10 7"><path d="M1 6l4-4 4 4" fill="none" stroke="#555" stroke-width="1.5"/></svg>
<svg style="position:absolute;left:196px;top:557px;" width="10" height="7" viewBox="0 0 10 7"><path d="M1 1l4 4 4-4" fill="none" stroke="#555" stroke-width="1.5"/></svg>
<div style="position:absolute;left:194px;top:309px;width:12px;height:93px;background:#cdcdcd"></div>
<div style="position:absolute;left:0px;top:311px;width:191px;height:20px;background:#ffffff;border-bottom:1px dotted #9a9a9a;box-sizing:border-box"></div>
<div style="position:absolute;left:85px;top:311px;width:1px;height:20px;border-left:1px dotted #9a9a9a"></div>
<div style="position:absolute;left:178px;top:311px;width:1px;height:20px;border-left:1px dotted #9a9a9a"></div>
<div class="t" style="left:2px;top:313.0px;font-size:12px;line-height:16px;color:#222;">视图比例</div>
<div style="position:absolute;left:86px;top:312px;width:92px;height:19px;border:1.5px solid #1e1e1e;box-sizing:border-box;background:#fff"></div>
<div class="t" style="left:91px;top:313.0px;font-size:12px;line-height:16px;color:#222;">1 : 100</div>
<div style="position:absolute;left:0px;top:331px;width:191px;height:20px;background:#ffffff;border-bottom:1px dotted #9a9a9a;box-sizing:border-box"></div>
<div style="position:absolute;left:85px;top:331px;width:1px;height:20px;border-left:1px dotted #9a9a9a"></div>
<div style="position:absolute;left:178px;top:331px;width:1px;height:20px;border-left:1px dotted #9a9a9a"></div>
<div class="t" style="left:2px;top:333.0px;font-size:12px;line-height:16px;color:#9a9a9a;">比例值 1:</div>
<div class="t" style="left:88px;top:333.0px;font-size:12px;line-height:16px;color:#9a9a9a;">100</div>
<div style="position:absolute;left:0px;top:351px;width:191px;height:20px;background:#ffffff;border-bottom:1px dotted #9a9a9a;box-sizing:border-box"></div>
<div style="position:absolute;left:85px;top:351px;width:1px;height:20px;border-left:1px dotted #9a9a9a"></div>
<div style="position:absolute;left:178px;top:351px;width:1px;height:20px;border-left:1px dotted #9a9a9a"></div>
<div class="t" style="left:2px;top:353.0px;font-size:12px;line-height:16px;color:#222;">详细程度</div>
<div class="t" style="left:88px;top:353.0px;font-size:12px;line-height:16px;color:#222;">粗略</div>
<div style="position:absolute;left:0px;top:371px;width:191px;height:20px;background:#ffffff;border-bottom:1px dotted #9a9a9a;box-sizing:border-box"></div>
<div style="position:absolute;left:85px;top:371px;width:1px;height:20px;border-left:1px dotted #9a9a9a"></div>
<div style="position:absolute;left:178px;top:371px;width:1px;height:20px;border-left:1px dotted #9a9a9a"></div>
<div class="t" style="left:2px;top:373.0px;font-size:12px;line-height:16px;color:#222;">零件可见性</div>
<div class="t" style="left:88px;top:373.0px;font-size:12px;line-height:16px;color:#222;">显示零件</div>
<div style="position:absolute;left:0px;top:391px;width:191px;height:20px;background:#ffffff;border-bottom:1px dotted #9a9a9a;box-sizing:border-box"></div>
<div style="position:absolute;left:85px;top:391px;width:1px;height:20px;border-left:1px dotted #9a9a9a"></div>
<div style="position:absolute;left:178px;top:391px;width:1px;height:20px;border-left:1px dotted #9a9a9a"></div>
<div class="t" style="left:2px;top:393.0px;font-size:12px;line-height:16px;color:#222;">可见性/图形...</div>
<div style="position:absolute;left:87px;top:392px;width:90px;height:18px;background:#dedede;border:1px solid #bdbdbd;box-sizing:border-box"></div>
<div class="t" style="left:32px;width:200px;text-align:center;top:393.0px;font-size:12px;line-height:16px;color:#222;">编辑...</div>
<div style="position:absolute;left:0px;top:411px;width:191px;height:20px;background:#ffffff;border-bottom:1px dotted #9a9a9a;box-sizing:border-box"></div>
<div style="position:absolute;left:85px;top:411px;width:1px;height:20px;border-left:1px dotted #9a9a9a"></div>
<div style="position:absolute;left:178px;top:411px;width:1px;height:20px;border-left:1px dotted #9a9a9a"></div>
<div class="t" style="left:2px;top:413.0px;font-size:12px;line-height:16px;color:#222;">图形显示选项</div>
<div style="position:absolute;left:87px;top:412px;width:90px;height:18px;background:#dedede;border:1px solid #bdbdbd;box-sizing:border-box"></div>
<div class="t" style="left:32px;width:200px;text-align:center;top:413.0px;font-size:12px;line-height:16px;color:#222;">编辑...</div>
<div style="position:absolute;left:0px;top:431px;width:191px;height:20px;background:#ffffff;border-bottom:1px dotted #9a9a9a;box-sizing:border-box"></div>
<div style="position:absolute;left:85px;top:431px;width:1px;height:20px;border-left:1px dotted #9a9a9a"></div>
<div style="position:absolute;left:178px;top:431px;width:1px;height:20px;border-left:1px dotted #9a9a9a"></div>
<div class="t" style="left:2px;top:433.0px;font-size:12px;line-height:16px;color:#222;">规程</div>
<div class="t" style="left:88px;top:433.0px;font-size:12px;line-height:16px;color:#222;">卫浴</div>
<div style="position:absolute;left:0px;top:451px;width:191px;height:20px;background:#ffffff;border-bottom:1px dotted #9a9a9a;box-sizing:border-box"></div>
<div style="position:absolute;left:85px;top:451px;width:1px;height:20px;border-left:1px dotted #9a9a9a"></div>
<div style="position:absolute;left:178px;top:451px;width:1px;height:20px;border-left:1px dotted #9a9a9a"></div>
<div class="t" style="left:2px;top:453.0px;font-size:12px;line-height:16px;color:#222;">显示隐藏线</div>
<div class="t" style="left:88px;top:453.0px;font-size:12px;line-height:16px;color:#222;">按规程</div>
<div style="position:absolute;left:0px;top:471px;width:191px;height:20px;background:#ffffff;border-bottom:1px dotted #9a9a9a;box-sizing:border-box"></div>
<div style="position:absolute;left:85px;top:471px;width:1px;height:20px;border-left:1px dotted #9a9a9a"></div>
<div style="position:absolute;left:178px;top:471px;width:1px;height:20px;border-left:1px dotted #9a9a9a"></div>
<div class="t" style="left:2px;top:473.0px;font-size:12px;line-height:16px;color:#222;">默认分析显示...</div>
<div class="t" style="left:88px;top:473.0px;font-size:12px;line-height:16px;color:#222;">无</div>
<div style="position:absolute;left:0px;top:491px;width:191px;height:20px;background:#ffffff;border-bottom:1px dotted #9a9a9a;box-sizing:border-box"></div>
<div style="position:absolute;left:85px;top:491px;width:1px;height:20px;border-left:1px dotted #9a9a9a"></div>
<div style="position:absolute;left:178px;top:491px;width:1px;height:20px;border-left:1px dotted #9a9a9a"></div>
<div class="t" style="left:2px;top:493.0px;font-size:12px;line-height:16px;color:#222;">子规程</div>
<div class="t" style="left:88px;top:493.0px;font-size:12px;line-height:16px;color:#222;">给排水</div>
<div style="position:absolute;left:181px;top:493px;width:9px;height:16px;background:#f4f4f4;border:1px solid #b9b9b9;box-sizing:border-box"></div>
<div style="position:absolute;left:0px;top:511px;width:191px;height:20px;background:#dcdcdc"></div>
<div class="t" style="left:-2px;top:513.0px;font-size:12px;line-height:16px;color:#222;">范围</div>
<svg style="position:absolute;left:177px;top:515px;" width="8" height="11" viewBox="0 0 8 11"><path d="M0.5 5l3.5-3.5 3.5 3.5M0.5 9.5l3.5-3.5 3.5 3.5" fill="none" stroke="#222" stroke-width="1.3"/></svg>
<div style="position:absolute;left:0px;top:531px;width:191px;height:20px;background:#ffffff;border-bottom:1px dotted #9a9a9a;box-sizing:border-box"></div>
<div style="position:absolute;left:85px;top:531px;width:1px;height:20px;border-left:1px dotted #9a9a9a"></div>
<div style="position:absolute;left:178px;top:531px;width:1px;height:20px;border-left:1px dotted #9a9a9a"></div>
<div class="t" style="left:2px;top:533.0px;font-size:12px;line-height:16px;color:#222;">裁剪视图</div>
<div style="position:absolute;left:89px;top:535px;width:13px;height:13px;border:1px solid #333;box-sizing:border-box;background:#fff"></div>
<div style="position:absolute;left:0px;top:551px;width:191px;height:20px;background:#ffffff;border-bottom:1px dotted #9a9a9a;box-sizing:border-box"></div>
<div style="position:absolute;left:85px;top:551px;width:1px;height:20px;border-left:1px dotted #9a9a9a"></div>
<div style="position:absolute;left:178px;top:551px;width:1px;height:20px;border-left:1px dotted #9a9a9a"></div>
<div class="t" style="left:2px;top:553.0px;font-size:12px;line-height:16px;color:#222;">裁剪区域可见</div>
<div style="position:absolute;left:89px;top:555px;width:13px;height:13px;border:1px solid #333;box-sizing:border-box;background:#fff"></div>
<div style="position:absolute;left:0px;top:571px;width:191px;height:1px;background:#e0e0e0"></div>
<div class="t" style="left:-2px;top:572.5px;font-size:12px;line-height:16px;color:#1a6fc4;text-decoration:underline">属性帮助</div>
<div style="position:absolute;left:133px;top:572px;width:73px;height:19px;background:#dcdcdc;border:1px solid #cacaca;box-sizing:border-box"></div>
<div class="t" style="left:69px;width:200px;text-align:center;top:573.0px;font-size:12px;line-height:16px;color:#9a9a9a;">应用</div>
<div style="position:absolute;left:0px;top:593px;width:210px;height:2px;background:#c8c8c8"></div>
<div class="t" style="left:-3px;top:598.0px;font-size:12px;line-height:16px;color:#333;">项目浏览器 - 给排水 消防模型</div>
<svg style="position:absolute;left:195px;top:601px;" width="10" height="10" viewBox="0 0 10 10"><path d="M0.5 0.5l9 9M9.5 0.5l-9 9" stroke="#222" stroke-width="1.6"/></svg>
<div style="position:absolute;left:0px;top:616px;width:193px;height:398px;background:#ffffff"></div>
<div style="position:absolute;left:193px;top:616px;width:17px;height:398px;background:#f0f0f0"></div>
<svg style="position:absolute;left:197px;top:621px;" width="10" height="7" viewBox="0 0 10 7"><path d="M1 6l4-4 4 4" fill="none" stroke="#555" stroke-width="1.5"/></svg>
<svg style="position:absolute;left:197px;top:1003px;" width="10" height="7" viewBox="0 0 10 7"><path d="M1 1l4 4 4-4" fill="none" stroke="#555" stroke-width="1.5"/></svg>
<div style="position:absolute;left:196px;top:633px;width:11px;height:70px;background:#cdcdcd"></div>
<div style="position:absolute;left:2px;top:630px;width:1px;height:384px;border-left:1px dotted #a0a0a0"></div>
<div style="position:absolute;left:20px;top:650px;width:1px;height:364px;border-left:1px dotted #a0a0a0"></div>
<div style="position:absolute;left:40px;top:690px;width:1px;height:216px;border-left:1px dotted #a0a0a0"></div>
<div style="position:absolute;left:60px;top:710px;width:1px;height:96px;border-left:1px dotted #a0a0a0"></div>
<div style="position:absolute;left:60px;top:910px;width:1px;height:104px;border-left:1px dotted #a0a0a0"></div>
<div style="position:absolute;left:80px;top:715px;width:1px;height:31px;border-left:1px dotted #a0a0a0"></div>
<div style="position:absolute;left:80px;top:775px;width:1px;height:11px;border-left:1px dotted #a0a0a0"></div>
<div style="position:absolute;left:80px;top:815px;width:1px;height:71px;border-left:1px dotted #a0a0a0"></div>
<div style="position:absolute;left:80px;top:935px;width:1px;height:31px;border-left:1px dotted #a0a0a0"></div>
<div style="position:absolute;left:80px;top:995px;width:1px;height:11px;border-left:1px dotted #a0a0a0"></div>
<div style="position:absolute;left:31px;top:617px;width:66px;height:19px;background:#d9d9d9"></div>
<div style="position:absolute;left:4px;top:625px;width:8px;height:1px;border-top:1px dotted #a0a0a0"></div>
<svg style="position:absolute;left:-2.5px;top:620.5px;" width="9" height="9" viewBox="0 0 9 9"><defs><linearGradient id="eg" x1="0" y1="0" x2="0" y2="1"><stop offset="0" stop-color="#fdfdfd"/><stop offset="1" stop-color="#d8dde3"/></linearGradient></defs><rect x="0.5" y="0.5" width="8" height="8" fill="url(#eg)" stroke="#9aa3ad"/><path d="M2 4.5h5" stroke="#3c5a80" stroke-width="1.2"/></svg>
<svg style="position:absolute;left:13px;top:618px;" width="14" height="14" viewBox="0 0 14 14"><path d="M0.5 4V0.5H4M10 0.5h3.5V4M13.5 10v3.5H10M4 13.5H0.5V10" fill="none" stroke="#333" stroke-width="1.1"/><rect x="4.5" y="4.5" width="5" height="5" rx="1" fill="none" stroke="#555"/></svg>
<div class="t" style="left:34px;top:617.0px;font-size:12px;line-height:16px;color:#222;">视图 (规程)</div>
<svg style="position:absolute;left:15.5px;top:640.5px;" width="9" height="9" viewBox="0 0 9 9"><defs><linearGradient id="eg" x1="0" y1="0" x2="0" y2="1"><stop offset="0" stop-color="#fdfdfd"/><stop offset="1" stop-color="#d8dde3"/></linearGradient></defs><rect x="0.5" y="0.5" width="8" height="8" fill="url(#eg)" stroke="#9aa3ad"/><path d="M2 4.5h5" stroke="#3c5a80" stroke-width="1.2"/><path d="M4.5 2v5" stroke="#3c5a80" stroke-width="1.2"/></svg>
<div style="position:absolute;left:25px;top:645px;width:10px;height:1px;border-top:1px dotted #a0a0a0"></div>
<div class="t" style="left:38px;top:637.0px;font-size:12px;line-height:16px;color:#222;">协调</div>
<svg style="position:absolute;left:15.5px;top:660.5px;" width="9" height="9" viewBox="0 0 9 9"><defs><linearGradient id="eg" x1="0" y1="0" x2="0" y2="1"><stop offset="0" stop-color="#fdfdfd"/><stop offset="1" stop-color="#d8dde3"/></linearGradient></defs><rect x="0.5" y="0.5" width="8" height="8" fill="url(#eg)" stroke="#9aa3ad"/><path d="M2 4.5h5" stroke="#3c5a80" stroke-width="1.2"/></svg>
<div style="position:absolute;left:25px;top:665px;width:10px;height:1px;border-top:1px dotted #a0a0a0"></div>
<div class="t" style="left:38px;top:657.0px;font-size:12px;line-height:16px;color:#222;">卫浴</div>
<svg style="position:absolute;left:35.5px;top:680.5px;" width="9" height="9" viewBox="0 0 9 9"><defs><linearGradient id="eg" x1="0" y1="0" x2="0" y2="1"><stop offset="0" stop-color="#fdfdfd"/><stop offset="1" stop-color="#d8dde3"/></linearGradient></defs><rect x="0.5" y="0.5" width="8" height="8" fill="url(#eg)" stroke="#9aa3ad"/><path d="M2 4.5h5" stroke="#3c5a80" stroke-width="1.2"/></svg>
<div style="position:absolute;left:45px;top:685px;width:10px;height:1px;border-top:1px dotted #a0a0a0"></div>
<div class="t" style="left:58px;top:677.0px;font-size:12px;line-height:16px;color:#222;">消防栓</div>
<svg style="position:absolute;left:55.5px;top:700.5px;" width="9" height="9" viewBox="0 0 9 9"><defs><linearGradient id="eg" x1="0" y1="0" x2="0" y2="1"><stop offset="0" stop-color="#fdfdfd"/><stop offset="1" stop-color="#d8dde3"/></linearGradient></defs><rect x="0.5" y="0.5" width="8" height="8" fill="url(#eg)" stroke="#9aa3ad"/><path d="M2 4.5h5" stroke="#3c5a80" stroke-width="1.2"/></svg>
<div style="position:absolute;left:65px;top:705px;width:10px;height:1px;border-top:1px dotted #a0a0a0"></div>
<div class="t" style="left:78px;top:697.0px;font-size:12px;line-height:16px;color:#222;">楼层平面</div>
<div style="position:absolute;left:81px;top:725px;width:14px;height:1px;border-top:1px dotted #a0a0a0"></div>
<div class="t" style="left:98px;top:717.0px;font-size:12px;line-height:16px;color:#222;">1F - 消防栓</div>
<div style="position:absolute;left:81px;top:745px;width:14px;height:1px;border-top:1px dotted #a0a0a0"></div>
<div class="t" style="left:98px;top:737.0px;font-size:12px;line-height:16px;color:#222;">2F - 消防栓</div>
<svg style="position:absolute;left:55.5px;top:760.5px;" width="9" height="9" viewBox="0 0 9 9"><defs><linearGradient id="eg" x1="0" y1="0" x2="0" y2="1"><stop offset="0" stop-color="#fdfdfd"/><stop offset="1" stop-color="#d8dde3"/></linearGradient></defs><rect x="0.5" y="0.5" width="8" height="8" fill="url(#eg)" stroke="#9aa3ad"/><path d="M2 4.5h5" stroke="#3c5a80" stroke-width="1.2"/></svg>
<div style="position:absolute;left:65px;top:765px;width:10px;height:1px;border-top:1px dotted #a0a0a0"></div>
<div class="t" style="left:78px;top:757.0px;font-size:12px;line-height:16px;color:#222;">三维视图</div>
<div style="position:absolute;left:81px;top:785px;width:14px;height:1px;border-top:1px dotted #a0a0a0"></div>
<div class="t" style="left:98px;top:777.0px;font-size:12px;line-height:16px;color:#222;">三维消防</div>
<svg style="position:absolute;left:55.5px;top:800.5px;" width="9" height="9" viewBox="0 0 9 9"><defs><linearGradient id="eg" x1="0" y1="0" x2="0" y2="1"><stop offset="0" stop-color="#fdfdfd"/><stop offset="1" stop-color="#d8dde3"/></linearGradient></defs><rect x="0.5" y="0.5" width="8" height="8" fill="url(#eg)" stroke="#9aa3ad"/><path d="M2 4.5h5" stroke="#3c5a80" stroke-width="1.2"/></svg>
<div style="position:absolute;left:65px;top:805px;width:10px;height:1px;border-top:1px dotted #a0a0a0"></div>
<div class="t" style="left:78px;top:797.0px;font-size:12px;line-height:16px;color:#222;">立面 (建筑立面)</div>
<div style="position:absolute;left:81px;top:825px;width:14px;height:1px;border-top:1px dotted #a0a0a0"></div>
<div class="t" style="left:98px;top:817.0px;font-size:12px;line-height:16px;color:#222;">东 - 消防栓</div>
<div style="position:absolute;left:81px;top:845px;width:14px;height:1px;border-top:1px dotted #a0a0a0"></div>
<div class="t" style="left:98px;top:837.0px;font-size:12px;line-height:16px;color:#222;">北 - 消防栓</div>
<div style="position:absolute;left:81px;top:865px;width:14px;height:1px;border-top:1px dotted #a0a0a0"></div>
<div class="t" style="left:98px;top:857.0px;font-size:12px;line-height:16px;color:#222;">南 - 消防栓</div>
<div style="position:absolute;left:81px;top:885px;width:14px;height:1px;border-top:1px dotted #a0a0a0"></div>
<div class="t" style="left:98px;top:877.0px;font-size:12px;line-height:16px;color:#222;">西 - 消防栓</div>
<svg style="position:absolute;left:35.5px;top:900.5px;" width="9" height="9" viewBox="0 0 9 9"><defs><linearGradient id="eg" x1="0" y1="0" x2="0" y2="1"><stop offset="0" stop-color="#fdfdfd"/><stop offset="1" stop-color="#d8dde3"/></linearGradient></defs><rect x="0.5" y="0.5" width="8" height="8" fill="url(#eg)" stroke="#9aa3ad"/><path d="M2 4.5h5" stroke="#3c5a80" stroke-width="1.2"/></svg>
<div style="position:absolute;left:45px;top:905px;width:10px;height:1px;border-top:1px dotted #a0a0a0"></div>
<div class="t" style="left:58px;top:897.0px;font-size:12px;line-height:16px;color:#222;">给排水</div>
<svg style="position:absolute;left:55.5px;top:920.5px;" width="9" height="9" viewBox="0 0 9 9"><defs><linearGradient id="eg" x1="0" y1="0" x2="0" y2="1"><stop offset="0" stop-color="#fdfdfd"/><stop offset="1" stop-color="#d8dde3"/></linearGradient></defs><rect x="0.5" y="0.5" width="8" height="8" fill="url(#eg)" stroke="#9aa3ad"/><path d="M2 4.5h5" stroke="#3c5a80" stroke-width="1.2"/></svg>
<div style="position:absolute;left:65px;top:925px;width:10px;height:1px;border-top:1px dotted #a0a0a0"></div>
<div class="t" style="left:78px;top:917.0px;font-size:12px;line-height:16px;color:#222;">楼层平面</div>
<div style="position:absolute;left:81px;top:945px;width:14px;height:1px;border-top:1px dotted #a0a0a0"></div>
<div class="t" style="left:98px;top:937.0px;font-size:12px;line-height:16px;color:#222;">1F - 给排水</div>
<div style="position:absolute;left:81px;top:965px;width:14px;height:1px;border-top:1px dotted #a0a0a0"></div>
<div class="t" style="left:98px;top:957.0px;font-size:12px;line-height:16px;color:#222;">2F - 给排水</div>
<svg style="position:absolute;left:55.5px;top:980.5px;" width="9" height="9" viewBox="0 0 9 9"><defs><linearGradient id="eg" x1="0" y1="0" x2="0" y2="1"><stop offset="0" stop-color="#fdfdfd"/><stop offset="1" stop-color="#d8dde3"/></linearGradient></defs><rect x="0.5" y="0.5" width="8" height="8" fill="url(#eg)" stroke="#9aa3ad"/><path d="M2 4.5h5" stroke="#3c5a80" stroke-width="1.2"/></svg>
<div style="position:absolute;left:65px;top:985px;width:10px;height:1px;border-top:1px dotted #a0a0a0"></div>
<div class="t" style="left:78px;top:977.0px;font-size:12px;line-height:16px;color:#222;">三维视图</div>
<div style="position:absolute;left:81px;top:1005px;width:14px;height:1px;border-top:1px dotted #a0a0a0"></div>
<div class="t" style="left:98px;top:997.0px;font-size:12px;line-height:16px;color:#222;font-weight:bold">三维卫浴</div>
<div style="position:absolute;left:0px;top:171px;width:1911px;height:2px;background:#c8c8c8"></div>
<div style="position:absolute;left:210px;top:173px;width:2px;height:844px;background:#c8c8c8"></div>
<div style="position:absolute;left:212px;top:171px;width:1699px;height:22px;background:#cccccc"></div>
<div style="position:absolute;left:212px;top:173px;width:128px;height:20px;background:#ffffff"></div>
<div style="position:absolute;left:212px;top:193px;width:1699px;height:2px;background:#ffffff"></div>
<div class="t" style="left:241px;top:175.0px;font-size:12px;line-height:16px;color:#1e1e1e;">三维卫浴</div>
<div style="position:absolute;left:214px;top:195px;width:1680px;height:802px;background:#000000"></div>
<div style="position:absolute;left:1894px;top:195px;width:1px;height:802px;background:#ffffff"></div>
<div style="position:absolute;left:212px;top:195px;width:2px;height:803px;background:#ffffff"></div>
<div style="position:absolute;left:214px;top:997px;width:1697px;height:1px;background:#ffffff"></div>
<div style="position:absolute;left:1895px;top:195px;width:16px;height:802px;background:#f0f0f0"></div>
<svg style="position:absolute;left:0;top:0" width="1911" height="1017" viewBox="0 0 1911 1017"><defs><clipPath id="cv"><rect x="214" y="195" width="1680" height="802"/></clipPath></defs><g clip-path="url(#cv)" shape-rendering="crispEdges"><line x1="371" y1="352.5" x2="405" y2="352.5" stroke="#ffffff" stroke-width="1" /><path d="M405 352.5L412 359.5L419 352.5Z" fill="none" stroke="#ffffff" stroke-width="1"/><line x1="412" y1="359.5" x2="1623" y2="359.5" stroke="#ffffff" stroke-width="1" /><text x="408.2" y="357.5" transform="scale(0.85,1)" font-size="11" fill="#e6e6e6" font-family="Liberation Sans, sans-serif">屋顶</text><text x="474.4" y="349.5" transform="scale(0.78,1)" font-size="9" fill="#e6e6e6" font-family="Liberation Sans, sans-serif">15.800</text><line x1="371" y1="444.5" x2="405" y2="444.5" stroke="#ffffff" stroke-width="1" /><path d="M405 444.5L412 451.5L419 444.5Z" fill="none" stroke="#ffffff" stroke-width="1"/><line x1="412" y1="451.5" x2="1623" y2="451.5" stroke="#ffffff" stroke-width="1" /><text x="442.5" y="449.0" transform="scale(0.8,1)" font-size="11" fill="#e6e6e6" font-family="Liberation Sans, sans-serif">4F</text><text x="474.4" y="441.5" transform="scale(0.78,1)" font-size="9" fill="#e6e6e6" font-family="Liberation Sans, sans-serif">12.000</text><line x1="371" y1="539.5" x2="405" y2="539.5" stroke="#ffffff" stroke-width="1" /><path d="M405 539.5L412 546.5L419 539.5Z" fill="none" stroke="#ffffff" stroke-width="1"/><line x1="412" y1="546.5" x2="1623" y2="546.5" stroke="#ffffff" stroke-width="1" /><text x="442.5" y="544.0" transform="scale(0.8,1)" font-size="11" fill="#e6e6e6" font-family="Liberation Sans, sans-serif">3F</text><text x="474.4" y="536.5" transform="scale(0.78,1)" font-size="9" fill="#e6e6e6" font-family="Liberation Sans, sans-serif">8.100</text><line x1="371" y1="634.5" x2="405" y2="634.5" stroke="#2f63b8" stroke-width="1" /><path d="M405 634.5L412 641.5L419 634.5Z" fill="none" stroke="#2f63b8" stroke-width="1"/><line x1="412" y1="641.5" x2="1623" y2="641.5" stroke="#ffffff" stroke-width="1" /><text x="442.5" y="639.0" transform="scale(0.8,1)" font-size="11" fill="#e6e6e6" font-family="Liberation Sans, sans-serif">2F</text><text x="474.4" y="631.5" transform="scale(0.78,1)" font-size="9" fill="#e6e6e6" font-family="Liberation Sans, sans-serif">4.200</text><line x1="371" y1="737" x2="405" y2="737" stroke="#2f63b8" stroke-width="1" /><path d="M405 737L412 743.5L419 737Z" fill="none" stroke="#2f63b8" stroke-width="1"/><line x1="412" y1="743.5" x2="1623" y2="743.5" stroke="#ffffff" stroke-width="1" /><text x="442.5" y="741.0" transform="scale(0.8,1)" font-size="11" fill="#e6e6e6" font-family="Liberation Sans, sans-serif">1F</text><text x="474.4" y="734" transform="scale(0.78,1)" font-size="9" fill="#e6e6e6" font-family="Liberation Sans, sans-serif">±0.000</text><line x1="463.5" y1="638.5" x2="463.5" y2="784.5" stroke="#ffffff" stroke-width="1" /><line x1="379" y1="784.5" x2="463.5" y2="784.5" stroke="#ffffff" stroke-width="1" /><line x1="463" y1="638.5" x2="1553.5" y2="638.5" stroke="#ffffff" stroke-width="1" /><line x1="1553.5" y1="638.5" x2="1553.5" y2="784.5" stroke="#ffffff" stroke-width="1" /><line x1="1550" y1="784.5" x2="1557" y2="784.5" stroke="#ffffff" stroke-width="1" /><line x1="995.5" y1="360" x2="995.5" y2="743.5" stroke="#ffffff" stroke-width="1" /><path d="M993.5 622h4M993.5 628h4M993.5 622l4 6M997.5 622l-4 6" stroke="#fff" stroke-width="1" fill="none"/><path d="M993.5 678h4M993.5 684h4M993.5 678l4 6M997.5 678l-4 6" stroke="#fff" stroke-width="1" fill="none"/><line x1="1335.5" y1="361" x2="1335.5" y2="743.5" stroke="#ffffff" stroke-width="1" /><path d="M1333.5 625h4M1333.5 631h4M1333.5 625l4 6M1337.5 625l-4 6" stroke="#fff" stroke-width="1" fill="none"/><path d="M1333.5 672h4M1333.5 678h4M1333.5 672l4 6M1337.5 672l-4 6" stroke="#fff" stroke-width="1" fill="none"/><line x1="1524.5" y1="328" x2="1524.5" y2="743.5" stroke="#ffffff" stroke-width="1" /><path d="M1522.5 339h4M1522.5 345h4M1522.5 339l4 6M1526.5 339l-4 6" stroke="#fff" stroke-width="1" fill="none"/><path d="M1522.5 624h4M1522.5 630h4M1522.5 624l4 6M1526.5 624l-4 6" stroke="#fff" stroke-width="1" fill="none"/><rect x="955.0" y="408.0" width="17.0" height="15.0" stroke="#ffffff" stroke-width="1" fill="none"/><rect x="955.0" y="423.0" width="17.0" height="30.0" stroke="#ffffff" stroke-width="1" fill="none"/><rect x="957.0" y="424.5" width="13.0" height="26.5" stroke="#ffffff" stroke-width="1" fill="none"/><line x1="968.5" y1="424.5" x2="968.5" y2="451.0" stroke="#ffffff" stroke-width="1" /><line x1="958.0" y1="425.5" x2="968.0" y2="450.0" stroke="#ffffff" stroke-width="1" /><line x1="968.0" y1="425.5" x2="958.0" y2="450.0" stroke="#ffffff" stroke-width="1" /><circle cx="964.0" cy="437.75" r="3.2" stroke="#fff" stroke-width="0.9" fill="none"/><rect x="960.0" y="434.75" width="3.0" height="6.0" stroke="#ffffff" stroke-width="0.9" fill="none"/><line x1="972.5" y1="425.5" x2="995.5" y2="425.5" stroke="#ffffff" stroke-width="1" /><rect x="955.0" y="503.0" width="17.0" height="15.0" stroke="#ffffff" stroke-width="1" fill="none"/><rect x="955.0" y="518.0" width="17.0" height="30.0" stroke="#ffffff" stroke-width="1" fill="none"/><rect x="957.0" y="519.5" width="13.0" height="26.5" stroke="#ffffff" stroke-width="1" fill="none"/><line x1="968.5" y1="519.5" x2="968.5" y2="546.0" stroke="#ffffff" stroke-width="1" /><line x1="958.0" y1="520.5" x2="968.0" y2="545.0" stroke="#ffffff" stroke-width="1" /><line x1="968.0" y1="520.5" x2="958.0" y2="545.0" stroke="#ffffff" stroke-width="1" /><circle cx="964.0" cy="532.75" r="3.2" stroke="#fff" stroke-width="0.9" fill="none"/><rect x="960.0" y="529.75" width="3.0" height="6.0" stroke="#ffffff" stroke-width="0.9" fill="none"/><line x1="972.5" y1="520.5" x2="995.5" y2="520.5" stroke="#ffffff" stroke-width="1" /><rect x="955.0" y="700.0" width="17.0" height="15.0" stroke="#ffffff" stroke-width="1" fill="none"/><rect x="955.0" y="715.0" width="17.0" height="30.0" stroke="#ffffff" stroke-width="1" fill="none"/><rect x="957.0" y="716.5" width="13.0" height="26.5" stroke="#ffffff" stroke-width="1" fill="none"/><line x1="968.5" y1="716.5" x2="968.5" y2="743.0" stroke="#ffffff" stroke-width="1" /><line x1="958.0" y1="717.5" x2="968.0" y2="742.0" stroke="#ffffff" stroke-width="1" /><line x1="968.0" y1="717.5" x2="958.0" y2="742.0" stroke="#ffffff" stroke-width="1" /><circle cx="964.0" cy="729.75" r="3.2" stroke="#fff" stroke-width="0.9" fill="none"/><rect x="960.0" y="726.75" width="3.0" height="6.0" stroke="#ffffff" stroke-width="0.9" fill="none"/><line x1="972.5" y1="717.5" x2="995.5" y2="717.5" stroke="#ffffff" stroke-width="1" /><rect x="955.0" y="594.5" width="17.0" height="15.0" stroke="#ffffff" stroke-width="1" fill="none"/><rect x="955.0" y="609.5" width="17.0" height="31.0" stroke="#ffffff" stroke-width="1" fill="none"/><rect x="957.0" y="611" width="13.0" height="29" stroke="#ffffff" stroke-width="1" fill="none"/><line x1="968.5" y1="611" x2="968.5" y2="640" stroke="#ffffff" stroke-width="1" /><line x1="958.0" y1="612" x2="968.0" y2="639" stroke="#ffffff" stroke-width="1" /><line x1="968.0" y1="612" x2="958.0" y2="639" stroke="#ffffff" stroke-width="1" /><circle cx="964.0" cy="625.5" r="3.2" stroke="#fff" stroke-width="0.9" fill="none"/><rect x="960.0" y="622.5" width="3.0" height="6.0" stroke="#ffffff" stroke-width="0.9" fill="none"/><line x1="972.5" y1="611.5" x2="995.5" y2="611.5" stroke="#ffffff" stroke-width="1" /><rect x="1293.5" y="408.0" width="19.0" height="15.0" stroke="#ffffff" stroke-width="1" fill="none"/><rect x="1293.5" y="423.0" width="19.0" height="30.0" stroke="#ffffff" stroke-width="1" fill="none"/><rect x="1295.5" y="424.5" width="15.0" height="26.5" stroke="#ffffff" stroke-width="1" fill="none"/><line x1="1309.0" y1="424.5" x2="1309.0" y2="451.0" stroke="#ffffff" stroke-width="1" /><line x1="1296.5" y1="425.5" x2="1308.5" y2="450.0" stroke="#ffffff" stroke-width="1" /><line x1="1308.5" y1="425.5" x2="1296.5" y2="450.0" stroke="#ffffff" stroke-width="1" /><circle cx="1303.5" cy="437.75" r="3.2" stroke="#fff" stroke-width="0.9" fill="none"/><rect x="1299.5" y="434.75" width="3.0" height="6.0" stroke="#ffffff" stroke-width="0.9" fill="none"/><line x1="1313" y1="425.5" x2="1335.5" y2="425.5" stroke="#ffffff" stroke-width="1" /><rect x="1293.5" y="503.0" width="19.0" height="15.0" stroke="#ffffff" stroke-width="1" fill="none"/><rect x="1293.5" y="518.0" width="19.0" height="30.0" stroke="#ffffff" stroke-width="1" fill="none"/><rect x="1295.5" y="519.5" width="15.0" height="26.5" stroke="#ffffff" stroke-width="1" fill="none"/><line x1="1309.0" y1="519.5" x2="1309.0" y2="546.0" stroke="#ffffff" stroke-width="1" /><line x1="1296.5" y1="520.5" x2="1308.5" y2="545.0" stroke="#ffffff" stroke-width="1" /><line x1="1308.5" y1="520.5" x2="1296.5" y2="545.0" stroke="#ffffff" stroke-width="1" /><circle cx="1303.5" cy="532.75" r="3.2" stroke="#fff" stroke-width="0.9" fill="none"/><rect x="1299.5" y="529.75" width="3.0" height="6.0" stroke="#ffffff" stroke-width="0.9" fill="none"/><line x1="1313" y1="520.5" x2="1335.5" y2="520.5" stroke="#ffffff" stroke-width="1" /><rect x="1293.5" y="700.0" width="19.0" height="15.0" stroke="#ffffff" stroke-width="1" fill="none"/><rect x="1293.5" y="715.0" width="19.0" height="30.0" stroke="#ffffff" stroke-width="1" fill="none"/><rect x="1295.5" y="716.5" width="15.0" height="26.5" stroke="#ffffff" stroke-width="1" fill="none"/><line x1="1309.0" y1="716.5" x2="1309.0" y2="743.0" stroke="#ffffff" stroke-width="1" /><line x1="1296.5" y1="717.5" x2="1308.5" y2="742.0" stroke="#ffffff" stroke-width="1" /><line x1="1308.5" y1="717.5" x2="1296.5" y2="742.0" stroke="#ffffff" stroke-width="1" /><circle cx="1303.5" cy="729.75" r="3.2" stroke="#fff" stroke-width="0.9" fill="none"/><rect x="1299.5" y="726.75" width="3.0" height="6.0" stroke="#ffffff" stroke-width="0.9" fill="none"/><line x1="1313" y1="717.5" x2="1335.5" y2="717.5" stroke="#ffffff" stroke-width="1" /><rect x="1293.5" y="598.0" width="19.0" height="15.0" stroke="#ffffff" stroke-width="1" fill="none"/><rect x="1293.5" y="613.0" width="19.0" height="30.5" stroke="#ffffff" stroke-width="1" fill="none"/><rect x="1295.5" y="614.5" width="15.0" height="28.5" stroke="#ffffff" stroke-width="1" fill="none"/><line x1="1309.0" y1="614.5" x2="1309.0" y2="643" stroke="#ffffff" stroke-width="1" /><line x1="1296.5" y1="615.5" x2="1308.5" y2="642" stroke="#ffffff" stroke-width="1" /><line x1="1308.5" y1="615.5" x2="1296.5" y2="642" stroke="#ffffff" stroke-width="1" /><circle cx="1303.5" cy="628.75" r="3.2" stroke="#fff" stroke-width="0.9" fill="none"/><rect x="1299.5" y="625.75" width="3.0" height="6.0" stroke="#ffffff" stroke-width="0.9" fill="none"/><line x1="1313" y1="614.5" x2="1335.5" y2="614.5" stroke="#ffffff" stroke-width="1" /><rect x="1482.5" y="408.0" width="19.0" height="15.0" stroke="#ffffff" stroke-width="1" fill="none"/><rect x="1482.5" y="423.0" width="19.0" height="30.0" stroke="#ffffff" stroke-width="1" fill="none"/><rect x="1484.5" y="424.5" width="15.0" height="26.5" stroke="#ffffff" stroke-width="1" fill="none"/><line x1="1498.0" y1="424.5" x2="1498.0" y2="451.0" stroke="#ffffff" stroke-width="1" /><line x1="1485.5" y1="425.5" x2="1497.5" y2="450.0" stroke="#ffffff" stroke-width="1" /><line x1="1497.5" y1="425.5" x2="1485.5" y2="450.0" stroke="#ffffff" stroke-width="1" /><circle cx="1492.5" cy="437.75" r="3.2" stroke="#fff" stroke-width="0.9" fill="none"/><rect x="1488.5" y="434.75" width="3.0" height="6.0" stroke="#ffffff" stroke-width="0.9" fill="none"/><line x1="1502" y1="425.5" x2="1524.5" y2="425.5" stroke="#ffffff" stroke-width="1" /><rect x="1482.5" y="503.0" width="19.0" height="15.0" stroke="#ffffff" stroke-width="1" fill="none"/><rect x="1482.5" y="518.0" width="19.0" height="30.0" stroke="#ffffff" stroke-width="1" fill="none"/><rect x="1484.5" y="519.5" width="15.0" height="26.5" stroke="#ffffff" stroke-width="1" fill="none"/><line x1="1498.0" y1="519.5" x2="1498.0" y2="546.0" stroke="#ffffff" stroke-width="1" /><line x1="1485.5" y1="520.5" x2="1497.5" y2="545.0" stroke="#ffffff" stroke-width="1" /><line x1="1497.5" y1="520.5" x2="1485.5" y2="545.0" stroke="#ffffff" stroke-width="1" /><circle cx="1492.5" cy="532.75" r="3.2" stroke="#fff" stroke-width="0.9" fill="none"/><rect x="1488.5" y="529.75" width="3.0" height="6.0" stroke="#ffffff" stroke-width="0.9" fill="none"/><line x1="1502" y1="520.5" x2="1524.5" y2="520.5" stroke="#ffffff" stroke-width="1" /><rect x="1482.5" y="700.0" width="19.0" height="15.0" stroke="#ffffff" stroke-width="1" fill="none"/><rect x="1482.5" y="715.0" width="19.0" height="30.0" stroke="#ffffff" stroke-width="1" fill="none"/><rect x="1484.5" y="716.5" width="15.0" height="26.5" stroke="#ffffff" stroke-width="1" fill="none"/><line x1="1498.0" y1="716.5" x2="1498.0" y2="743.0" stroke="#ffffff" stroke-width="1" /><line x1="1485.5" y1="717.5" x2="1497.5" y2="742.0" stroke="#ffffff" stroke-width="1" /><line x1="1497.5" y1="717.5" x2="1485.5" y2="742.0" stroke="#ffffff" stroke-width="1" /><circle cx="1492.5" cy="729.75" r="3.2" stroke="#fff" stroke-width="0.9" fill="none"/><rect x="1488.5" y="726.75" width="3.0" height="6.0" stroke="#ffffff" stroke-width="0.9" fill="none"/><line x1="1502" y1="717.5" x2="1524.5" y2="717.5" stroke="#ffffff" stroke-width="1" /><rect x="1482.5" y="598.0" width="19.0" height="15.0" stroke="#ffffff" stroke-width="1" fill="none"/><rect x="1482.5" y="613.0" width="19.0" height="30.5" stroke="#ffffff" stroke-width="1" fill="none"/><rect x="1484.5" y="614.5" width="15.0" height="28.5" stroke="#ffffff" stroke-width="1" fill="none"/><line x1="1498.0" y1="614.5" x2="1498.0" y2="643" stroke="#ffffff" stroke-width="1" /><line x1="1485.5" y1="615.5" x2="1497.5" y2="642" stroke="#ffffff" stroke-width="1" /><line x1="1497.5" y1="615.5" x2="1485.5" y2="642" stroke="#ffffff" stroke-width="1" /><circle cx="1492.5" cy="628.75" r="3.2" stroke="#fff" stroke-width="0.9" fill="none"/><rect x="1488.5" y="625.75" width="3.0" height="6.0" stroke="#ffffff" stroke-width="0.9" fill="none"/><line x1="1502" y1="614.5" x2="1524.5" y2="614.5" stroke="#ffffff" stroke-width="1" /><line x1="546.5" y1="359.5" x2="546.5" y2="775" stroke="#3fd83f" stroke-width="1" /><line x1="768.5" y1="359.5" x2="768.5" y2="777" stroke="#3fd83f" stroke-width="1" /><line x1="837.5" y1="359.5" x2="837.5" y2="773" stroke="#3fd83f" stroke-width="1" /><line x1="553.5" y1="751" x2="553.5" y2="774" stroke="#3fd83f" stroke-width="1" /><line x1="760.5" y1="755" x2="760.5" y2="774" stroke="#3fd83f" stroke-width="1" /><line x1="644.5" y1="359.5" x2="644.5" y2="743.5" stroke="#ffffff" stroke-width="1" /><path d="M642.5 683h4M642.5 689h4M642.5 683l4 6M646.5 683l-4 6" stroke="#fff" stroke-width="1" fill="none"/><line x1="632.5" y1="340" x2="632.5" y2="359.5" stroke="#ffffff" stroke-width="1" /><path d="M630.5 345h4M630.5 351h4M630.5 345l4 6M634.5 345l-4 6" stroke="#fff" stroke-width="1" fill="none"/><line x1="635.5" y1="366" x2="635.5" y2="779" stroke="#1c1c96" stroke-width="2" /><line x1="652.5" y1="394.5" x2="652.5" y2="451.5" stroke="#1c1c96" stroke-width="1.5" /><line x1="541" y1="423.0" x2="541" y2="451.5" stroke="#1a1ab4" stroke-width="1.5" /><line x1="540" y1="423.0" x2="556" y2="423.0" stroke="#1a1ab4" stroke-width="1.5" /><line x1="540" y1="432.5" x2="650" y2="432.5" stroke="#1a1ab4" stroke-width="1.5" /><line x1="540" y1="439.0" x2="770" y2="439.0" stroke="#1a1ab4" stroke-width="1.5" /><line x1="540" y1="445.0" x2="770" y2="445.0" stroke="#1a1ab4" stroke-width="1.5" /><line x1="540" y1="450.0" x2="808" y2="450.0" stroke="#1a1ab4" stroke-width="1.5" /><line x1="412" y1="451.5" x2="1623" y2="451.5" stroke="#ffffff" stroke-width="1" /><path d="M548 441.5 L552 439.5 L562 439.5 L572 441.5 L576 445.5 L570 447.5 L552 447.5Z" fill="#1428f0"/><path d="M549 429.5l9 9" stroke="#1428f0" stroke-width="4"/><line x1="556" y1="447.5" x2="556" y2="451.5" stroke="#4aa8e8" stroke-width="1" /><line x1="562" y1="447.5" x2="562" y2="451.5" stroke="#4aa8e8" stroke-width="1" /><line x1="565" y1="447.5" x2="565" y2="451.5" stroke="#4aa8e8" stroke-width="1" /><path d="M645 441.5 L641 439.5 L631 439.5 L621 441.5 L617 445.5 L623 447.5 L641 447.5Z" fill="#1428f0"/><path d="M644 429.5l-9 9" stroke="#1428f0" stroke-width="4"/><line x1="637" y1="447.5" x2="637" y2="451.5" stroke="#4aa8e8" stroke-width="1" /><line x1="631" y1="447.5" x2="631" y2="451.5" stroke="#4aa8e8" stroke-width="1" /><line x1="628" y1="447.5" x2="628" y2="451.5" stroke="#4aa8e8" stroke-width="1" /><path d="M742 441.5 L746 439.5 L756 439.5 L766 441.5 L770 445.5 L764 447.5 L746 447.5Z" fill="#1428f0"/><path d="M743 429.5l9 9" stroke="#1428f0" stroke-width="4"/><line x1="750" y1="447.5" x2="750" y2="451.5" stroke="#4aa8e8" stroke-width="1" /><line x1="756" y1="447.5" x2="756" y2="451.5" stroke="#4aa8e8" stroke-width="1" /><line x1="759" y1="447.5" x2="759" y2="451.5" stroke="#4aa8e8" stroke-width="1" /><path d="M566 432.5h16l-6 4h-4Z" fill="#1a1ab4"/><path d="M584 432.5h16l-6 4h-4Z" fill="#1a1ab4"/><path d="M604 432.5h16l-6 4h-4Z" fill="#1a1ab4"/><path d="M744 432.5h16l-6 4h-4Z" fill="#1a1ab4"/><path d="M680 432.5h8l-4 3Z" fill="#1a1ab4"/><line x1="555.5" y1="427.5" x2="555.5" y2="451.5" stroke="#4aa8e8" stroke-width="1" /><line x1="574.5" y1="427.5" x2="574.5" y2="451.5" stroke="#4aa8e8" stroke-width="1" /><line x1="591.5" y1="427.5" x2="591.5" y2="451.5" stroke="#4aa8e8" stroke-width="1" /><line x1="653" y1="423.0" x2="691" y2="423.0" stroke="#1a1ab4" stroke-width="1.5" /><line x1="653" y1="431.0" x2="691" y2="431.0" stroke="#1a1ab4" stroke-width="1.5" /><line x1="727" y1="423.0" x2="770" y2="423.0" stroke="#1a1ab4" stroke-width="1.5" /><line x1="727" y1="431.0" x2="770" y2="431.0" stroke="#1a1ab4" stroke-width="1.5" /><line x1="785" y1="436.0" x2="836" y2="436.0" stroke="#1a1ab4" stroke-width="1.5" /><line x1="785" y1="444.0" x2="836" y2="444.0" stroke="#1a1ab4" stroke-width="1.5" /><line x1="778" y1="423.5" x2="778" y2="445.5" stroke="#1a1ab4" stroke-width="1.5" /><line x1="778" y1="423.5" x2="783" y2="423.5" stroke="#1a1ab4" stroke-width="1.5" /><rect x="783.5" y="444.0" width="25.0" height="7.0" stroke="#1a1ab4" stroke-width="1" fill="none"/><ellipse cx="834" cy="432.5" rx="10" ry="1.5" fill="#1a1ab4"/><ellipse cx="836" cy="431.5" rx="4" ry="3.5" fill="#1428f0"/><line x1="838" y1="427.5" x2="838" y2="444.5" stroke="#4aa8e8" stroke-width="1" /><line x1="764.5" y1="423.5" x2="764.5" y2="451.5" stroke="#4aa8e8" stroke-width="1" /><rect x="602.9" y="408.0" width="18.600000000000023" height="15.5" stroke="#ffffff" stroke-width="1" fill="none"/><rect x="602.9" y="423.5" width="18.600000000000023" height="30.0" stroke="#ffffff" stroke-width="1" fill="none"/><rect x="604.9" y="425.0" width="14.600000000000023" height="26.0" stroke="#ffffff" stroke-width="1" fill="none"/><line x1="618.0" y1="425.0" x2="618.0" y2="451.0" stroke="#ffffff" stroke-width="1" /><line x1="605.9" y1="426.0" x2="617.5" y2="450.0" stroke="#ffffff" stroke-width="1" /><line x1="617.5" y1="426.0" x2="605.9" y2="450.0" stroke="#ffffff" stroke-width="1" /><circle cx="612.7" cy="438.0" r="3.2" stroke="#fff" stroke-width="0.9" fill="none"/><rect x="608.7" y="435.0" width="3.0" height="6.0" stroke="#ffffff" stroke-width="0.9" fill="none"/><line x1="622" y1="425.5" x2="644.5" y2="425.5" stroke="#ffffff" stroke-width="1" /><rect x="653.5" y="425.5" width="6.0" height="20.0" stroke="#ffffff" stroke-width="1.5" fill="none"/><rect x="652.5" y="433.5" width="14.0" height="17.5" stroke="#ffffff" stroke-width="1.5" fill="none"/><line x1="652.5" y1="443.5" x2="666.5" y2="443.5" stroke="#ffffff" stroke-width="1.2" /><rect x="667.5" y="433.5" width="14.0" height="17.5" stroke="#ffffff" stroke-width="1.5" fill="none"/><line x1="667.5" y1="443.5" x2="681.5" y2="443.5" stroke="#ffffff" stroke-width="1.2" /><rect x="682.5" y="433.5" width="14.0" height="17.5" stroke="#ffffff" stroke-width="1.5" fill="none"/><line x1="682.5" y1="443.5" x2="696.5" y2="443.5" stroke="#ffffff" stroke-width="1.2" /><path d="M589.5 439.5h6l-3 4Z" fill="none" stroke="#3fd83f"/><line x1="592.5" y1="443.5" x2="592.5" y2="458.5" stroke="#3fd83f" stroke-width="1" /><path d="M597.5 439.5h6l-3 4Z" fill="none" stroke="#3fd83f"/><line x1="600.5" y1="443.5" x2="600.5" y2="458.5" stroke="#3fd83f" stroke-width="1" /><line x1="559" y1="448.5" x2="559" y2="462.5" stroke="#3fd83f" stroke-width="1" /><line x1="566" y1="448.5" x2="566" y2="462.5" stroke="#3fd83f" stroke-width="1" /><line x1="575" y1="448.5" x2="575" y2="462.5" stroke="#3fd83f" stroke-width="1" /><line x1="585" y1="448.5" x2="585" y2="462.5" stroke="#3fd83f" stroke-width="1" /><line x1="614" y1="448.5" x2="614" y2="462.5" stroke="#3fd83f" stroke-width="1" /><line x1="626" y1="448.5" x2="626" y2="462.5" stroke="#3fd83f" stroke-width="1" /><line x1="565" y1="458.5" x2="619" y2="458.5" stroke="#3fd83f" stroke-width="1" /><line x1="579" y1="461.5" x2="630" y2="461.5" stroke="#3fd83f" stroke-width="1" /><line x1="538" y1="462.5" x2="578" y2="462.5" stroke="#3fd83f" stroke-width="1" /><rect x="547" y="459.5" width="15" height="4.0" fill="#22ff22"/><line x1="658.5" y1="433.5" x2="658.5" y2="463.5" stroke="#3fd83f" stroke-width="1" /><line x1="674.5" y1="433.5" x2="674.5" y2="463.5" stroke="#3fd83f" stroke-width="1" /><line x1="689.5" y1="433.5" x2="689.5" y2="463.5" stroke="#3fd83f" stroke-width="1" /><line x1="716.5" y1="433.5" x2="716.5" y2="463.5" stroke="#3fd83f" stroke-width="1" /><line x1="656" y1="458.5" x2="700" y2="458.5" stroke="#3fd83f" stroke-width="1" /><line x1="685" y1="461.5" x2="770" y2="461.5" stroke="#3fd83f" stroke-width="1" /><rect x="752" y="458.5" width="18" height="5.0" fill="#22ff22"/><line x1="758" y1="448.5" x2="758" y2="459.5" stroke="#3fd83f" stroke-width="2" /><line x1="779" y1="455.0" x2="836" y2="455.0" stroke="#3fd83f" stroke-width="1" /><line x1="779" y1="458.5" x2="834" y2="458.5" stroke="#3fd83f" stroke-width="1" /><line x1="838" y1="453.5" x2="847" y2="453.5" stroke="#3fd83f" stroke-width="1" /><path d="M818 444.5h7l-3.5 4Z" fill="none" stroke="#3fd83f"/><line x1="821.5" y1="448.5" x2="821.5" y2="455.5" stroke="#3fd83f" stroke-width="1" /><path d="M776 444.5h7l-3.5 4Z" fill="none" stroke="#fff"/><line x1="780" y1="448.5" x2="780" y2="458.5" stroke="#3fd83f" stroke-width="1" /><line x1="652.5" y1="489.5" x2="652.5" y2="546.5" stroke="#1c1c96" stroke-width="1.5" /><line x1="541" y1="518.0" x2="541" y2="546.5" stroke="#1a1ab4" stroke-width="1.5" /><line x1="540" y1="518.0" x2="556" y2="518.0" stroke="#1a1ab4" stroke-width="1.5" /><line x1="540" y1="527.5" x2="650" y2="527.5" stroke="#1a1ab4" stroke-width="1.5" /><line x1="540" y1="534.0" x2="770" y2="534.0" stroke="#1a1ab4" stroke-width="1.5" /><line x1="540" y1="540.0" x2="770" y2="540.0" stroke="#1a1ab4" stroke-width="1.5" /><line x1="540" y1="545.0" x2="808" y2="545.0" stroke="#1a1ab4" stroke-width="1.5" /><line x1="412" y1="546.5" x2="1623" y2="546.5" stroke="#ffffff" stroke-width="1" /><path d="M548 536.5 L552 534.5 L562 534.5 L572 536.5 L576 540.5 L570 542.5 L552 542.5Z" fill="#1428f0"/><path d="M549 524.5l9 9" stroke="#1428f0" stroke-width="4"/><line x1="556" y1="542.5" x2="556" y2="546.5" stroke="#4aa8e8" stroke-width="1" /><line x1="562" y1="542.5" x2="562" y2="546.5" stroke="#4aa8e8" stroke-width="1" /><line x1="565" y1="542.5" x2="565" y2="546.5" stroke="#4aa8e8" stroke-width="1" /><path d="M645 536.5 L641 534.5 L631 534.5 L621 536.5 L617 540.5 L623 542.5 L641 542.5Z" fill="#1428f0"/><path d="M644 524.5l-9 9" stroke="#1428f0" stroke-width="4"/><line x1="637" y1="542.5" x2="637" y2="546.5" stroke="#4aa8e8" stroke-width="1" /><line x1="631" y1="542.5" x2="631" y2="546.5" stroke="#4aa8e8" stroke-width="1" /><line x1="628" y1="542.5" x2="628" y2="546.5" stroke="#4aa8e8" stroke-width="1" /><path d="M742 536.5 L746 534.5 L756 534.5 L766 536.5 L770 540.5 L764 542.5 L746 542.5Z" fill="#1428f0"/><path d="M743 524.5l9 9" stroke="#1428f0" stroke-width="4"/><line x1="750" y1="542.5" x2="750" y2="546.5" stroke="#4aa8e8" stroke-width="1" /><line x1="756" y1="542.5" x2="756" y2="546.5" stroke="#4aa8e8" stroke-width="1" /><line x1="759" y1="542.5" x2="759" y2="546.5" stroke="#4aa8e8" stroke-width="1" /><path d="M566 527.5h16l-6 4h-4Z" fill="#1a1ab4"/><path d="M584 527.5h16l-6 4h-4Z" fill="#1a1ab4"/><path d="M604 527.5h16l-6 4h-4Z" fill="#1a1ab4"/><path d="M744 527.5h16l-6 4h-4Z" fill="#1a1ab4"/><path d="M680 527.5h8l-4 3Z" fill="#1a1ab4"/><line x1="555.5" y1="522.5" x2="555.5" y2="546.5" stroke="#4aa8e8" stroke-width="1" /><line x1="574.5" y1="522.5" x2="574.5" y2="546.5" stroke="#4aa8e8" stroke-width="1" /><line x1="591.5" y1="522.5" x2="591.5" y2="546.5" stroke="#4aa8e8" stroke-width="1" /><line x1="653" y1="518.0" x2="691" y2="518.0" stroke="#1a1ab4" stroke-width="1.5" /><line x1="653" y1="526.0" x2="691" y2="526.0" stroke="#1a1ab4" stroke-width="1.5" /><line x1="727" y1="518.0" x2="770" y2="518.0" stroke="#1a1ab4" stroke-width="1.5" /><line x1="727" y1="526.0" x2="770" y2="526.0" stroke="#1a1ab4" stroke-width="1.5" /><line x1="785" y1="531.0" x2="836" y2="531.0" stroke="#1a1ab4" stroke-width="1.5" /><line x1="785" y1="539.0" x2="836" y2="539.0" stroke="#1a1ab4" stroke-width="1.5" /><line x1="778" y1="518.5" x2="778" y2="540.5" stroke="#1a1ab4" stroke-width="1.5" /><line x1="778" y1="518.5" x2="783" y2="518.5" stroke="#1a1ab4" stroke-width="1.5" /><rect x="783.5" y="539.0" width="25.0" height="7.0" stroke="#1a1ab4" stroke-width="1" fill="none"/><ellipse cx="834" cy="527.5" rx="10" ry="1.5" fill="#1a1ab4"/><ellipse cx="836" cy="526.5" rx="4" ry="3.5" fill="#1428f0"/><line x1="838" y1="522.5" x2="838" y2="539.5" stroke="#4aa8e8" stroke-width="1" /><line x1="764.5" y1="518.5" x2="764.5" y2="546.5" stroke="#4aa8e8" stroke-width="1" /><rect x="602.9" y="503.0" width="18.600000000000023" height="15.5" stroke="#ffffff" stroke-width="1" fill="none"/><rect x="602.9" y="518.5" width="18.600000000000023" height="30.0" stroke="#ffffff" stroke-width="1" fill="none"/><rect x="604.9" y="520.0" width="14.600000000000023" height="26.0" stroke="#ffffff" stroke-width="1" fill="none"/><line x1="618.0" y1="520.0" x2="618.0" y2="546.0" stroke="#ffffff" stroke-width="1" /><line x1="605.9" y1="521.0" x2="617.5" y2="545.0" stroke="#ffffff" stroke-width="1" /><line x1="617.5" y1="521.0" x2="605.9" y2="545.0" stroke="#ffffff" stroke-width="1" /><circle cx="612.7" cy="533.0" r="3.2" stroke="#fff" stroke-width="0.9" fill="none"/><rect x="608.7" y="530.0" width="3.0" height="6.0" stroke="#ffffff" stroke-width="0.9" fill="none"/><line x1="622" y1="520.5" x2="644.5" y2="520.5" stroke="#ffffff" stroke-width="1" /><rect x="653.5" y="520.5" width="6.0" height="20.0" stroke="#ffffff" stroke-width="1.5" fill="none"/><rect x="652.5" y="528.5" width="14.0" height="17.5" stroke="#ffffff" stroke-width="1.5" fill="none"/><line x1="652.5" y1="538.5" x2="666.5" y2="538.5" stroke="#ffffff" stroke-width="1.2" /><rect x="667.5" y="528.5" width="14.0" height="17.5" stroke="#ffffff" stroke-width="1.5" fill="none"/><line x1="667.5" y1="538.5" x2="681.5" y2="538.5" stroke="#ffffff" stroke-width="1.2" /><rect x="682.5" y="528.5" width="14.0" height="17.5" stroke="#ffffff" stroke-width="1.5" fill="none"/><line x1="682.5" y1="538.5" x2="696.5" y2="538.5" stroke="#ffffff" stroke-width="1.2" /><path d="M589.5 534.5h6l-3 4Z" fill="none" stroke="#3fd83f"/><line x1="592.5" y1="538.5" x2="592.5" y2="553.5" stroke="#3fd83f" stroke-width="1" /><path d="M597.5 534.5h6l-3 4Z" fill="none" stroke="#3fd83f"/><line x1="600.5" y1="538.5" x2="600.5" y2="553.5" stroke="#3fd83f" stroke-width="1" /><line x1="559" y1="543.5" x2="559" y2="557.5" stroke="#3fd83f" stroke-width="1" /><line x1="566" y1="543.5" x2="566" y2="557.5" stroke="#3fd83f" stroke-width="1" /><line x1="575" y1="543.5" x2="575" y2="557.5" stroke="#3fd83f" stroke-width="1" /><line x1="585" y1="543.5" x2="585" y2="557.5" stroke="#3fd83f" stroke-width="1" /><line x1="614" y1="543.5" x2="614" y2="557.5" stroke="#3fd83f" stroke-width="1" /><line x1="626" y1="543.5" x2="626" y2="557.5" stroke="#3fd83f" stroke-width="1" /><line x1="565" y1="553.5" x2="619" y2="553.5" stroke="#3fd83f" stroke-width="1" /><line x1="579" y1="556.5" x2="630" y2="556.5" stroke="#3fd83f" stroke-width="1" /><line x1="538" y1="557.5" x2="578" y2="557.5" stroke="#3fd83f" stroke-width="1" /><rect x="547" y="554.5" width="15" height="4.0" fill="#22ff22"/><line x1="658.5" y1="528.5" x2="658.5" y2="558.5" stroke="#3fd83f" stroke-width="1" /><line x1="674.5" y1="528.5" x2="674.5" y2="558.5" stroke="#3fd83f" stroke-width="1" /><line x1="689.5" y1="528.5" x2="689.5" y2="558.5" stroke="#3fd83f" stroke-width="1" /><line x1="716.5" y1="528.5" x2="716.5" y2="558.5" stroke="#3fd83f" stroke-width="1" /><line x1="656" y1="553.5" x2="700" y2="553.5" stroke="#3fd83f" stroke-width="1" /><line x1="685" y1="556.5" x2="770" y2="556.5" stroke="#3fd83f" stroke-width="1" /><rect x="752" y="553.5" width="18" height="5.0" fill="#22ff22"/><line x1="758" y1="543.5" x2="758" y2="554.5" stroke="#3fd83f" stroke-width="2" /><line x1="779" y1="550.0" x2="836" y2="550.0" stroke="#3fd83f" stroke-width="1" /><line x1="779" y1="553.5" x2="834" y2="553.5" stroke="#3fd83f" stroke-width="1" /><line x1="838" y1="548.5" x2="847" y2="548.5" stroke="#3fd83f" stroke-width="1" /><path d="M818 539.5h7l-3.5 4Z" fill="none" stroke="#3fd83f"/><line x1="821.5" y1="543.5" x2="821.5" y2="550.5" stroke="#3fd83f" stroke-width="1" /><path d="M776 539.5h7l-3.5 4Z" fill="none" stroke="#fff"/><line x1="780" y1="543.5" x2="780" y2="553.5" stroke="#3fd83f" stroke-width="1" /><line x1="652.5" y1="584.5" x2="652.5" y2="639.5" stroke="#1c1c96" stroke-width="1.5" /><line x1="541" y1="620.5" x2="541" y2="635.5" stroke="#1a1ab4" stroke-width="1.5" /><line x1="540" y1="620.5" x2="556" y2="620.5" stroke="#1a1ab4" stroke-width="1.5" /><line x1="540" y1="635.5" x2="650" y2="635.5" stroke="#1a1ab4" stroke-width="2" /><line x1="544" y1="622.5" x2="602" y2="622.5" stroke="#ffffff" stroke-width="2" /><path d="M548 622.0h14l-5 5h-4Z" fill="#fff"/><line x1="555" y1="626.5" x2="555" y2="639.5" stroke="#3fd83f" stroke-width="1" /><path d="M552 627.5l3 4 3-4" fill="none" stroke="#3fd83f"/><path d="M566 622.0h14l-5 5h-4Z" fill="#fff"/><line x1="573" y1="626.5" x2="573" y2="639.5" stroke="#3fd83f" stroke-width="1" /><path d="M570 627.5l3 4 3-4" fill="none" stroke="#3fd83f"/><path d="M584 622.0h14l-5 5h-4Z" fill="#fff"/><line x1="591" y1="626.5" x2="591" y2="639.5" stroke="#3fd83f" stroke-width="1" /><path d="M588 627.5l3 4 3-4" fill="none" stroke="#3fd83f"/><path d="M549 632.5h22l-3 6h-14Z" fill="#fff"/><line x1="553" y1="622.5" x2="553" y2="633.5" stroke="#ffffff" stroke-width="1.5" /><rect x="548" y="632.5" width="23" height="8.0" stroke="#ffffff" stroke-width="1" fill="none"/><rect x="602.9" y="597.5" width="18.600000000000023" height="15.0" stroke="#ffffff" stroke-width="1" fill="none"/><rect x="602.9" y="612.5" width="18.600000000000023" height="30.5" stroke="#ffffff" stroke-width="1" fill="none"/><rect x="604.9" y="614.5" width="14.600000000000023" height="27.0" stroke="#ffffff" stroke-width="1" fill="none"/><line x1="618.0" y1="614.5" x2="618.0" y2="641.5" stroke="#ffffff" stroke-width="1" /><line x1="605.9" y1="615.5" x2="617.5" y2="640.5" stroke="#ffffff" stroke-width="1" /><line x1="617.5" y1="615.5" x2="605.9" y2="640.5" stroke="#ffffff" stroke-width="1" /><circle cx="612.7" cy="628.0" r="3.2" stroke="#fff" stroke-width="0.9" fill="none"/><rect x="608.7" y="625.0" width="3.0" height="6.0" stroke="#ffffff" stroke-width="0.9" fill="none"/><line x1="622" y1="614.0" x2="644.5" y2="614.0" stroke="#ffffff" stroke-width="1" /><path d="M640 620.5c2 2 0 6-3 10h-8" fill="none" stroke="#fff" stroke-width="1.5"/><rect x="625" y="633.5" width="19" height="4.0" stroke="#ffffff" stroke-width="1.2" fill="none"/><rect x="653" y="624.5" width="14.5" height="16.5" stroke="#3fd83f" stroke-width="1.5" fill="none"/><rect x="667.5" y="624.5" width="14.5" height="16.5" stroke="#3fd83f" stroke-width="1.5" fill="none"/><rect x="682" y="624.5" width="14.5" height="16.5" stroke="#3fd83f" stroke-width="1.5" fill="none"/><line x1="653" y1="631.5" x2="697" y2="631.5" stroke="#3fd83f" stroke-width="1.5" /><rect x="653" y="637.5" width="44" height="3.0" fill="#3fd83f"/><rect x="653.5" y="615.5" width="6.0" height="20.0" stroke="#ffffff" stroke-width="1.5" fill="none"/><ellipse cx="656" cy="613.5" rx="2.5" ry="2.5" fill="#ffffff"/><line x1="538" y1="657.5" x2="630" y2="657.5" stroke="#3fd83f" stroke-width="1" /><line x1="585" y1="653.5" x2="619" y2="653.5" stroke="#3fd83f" stroke-width="1" /><rect x="547" y="654.5" width="15" height="4.0" fill="#22ff22"/><line x1="559" y1="639.5" x2="559" y2="658.5" stroke="#3fd83f" stroke-width="1" /><line x1="571" y1="639.5" x2="571" y2="658.5" stroke="#3fd83f" stroke-width="1" /><line x1="590" y1="639.5" x2="590" y2="658.5" stroke="#3fd83f" stroke-width="1" /><line x1="606" y1="639.5" x2="606" y2="658.5" stroke="#3fd83f" stroke-width="1" /><line x1="614" y1="639.5" x2="614" y2="658.5" stroke="#3fd83f" stroke-width="1" /><line x1="626" y1="639.5" x2="626" y2="658.5" stroke="#3fd83f" stroke-width="1" /><line x1="655" y1="657.5" x2="770" y2="657.5" stroke="#3fd83f" stroke-width="1" /><line x1="660" y1="654.5" x2="700" y2="654.5" stroke="#3fd83f" stroke-width="1" /><line x1="658" y1="641.5" x2="658" y2="658.5" stroke="#3fd83f" stroke-width="1" /><line x1="674" y1="641.5" x2="674" y2="658.5" stroke="#3fd83f" stroke-width="1" /><line x1="689" y1="641.5" x2="689" y2="658.5" stroke="#3fd83f" stroke-width="1" /><line x1="716" y1="641.5" x2="716" y2="658.5" stroke="#3fd83f" stroke-width="1" /><line x1="652.5" y1="686.5" x2="652.5" y2="741.5" stroke="#1c1c96" stroke-width="1.5" /><line x1="541" y1="722.5" x2="541" y2="737.5" stroke="#1a1ab4" stroke-width="1.5" /><line x1="540" y1="722.5" x2="556" y2="722.5" stroke="#1a1ab4" stroke-width="1.5" /><line x1="540" y1="737.5" x2="650" y2="737.5" stroke="#1a1ab4" stroke-width="2" /><line x1="544" y1="724.5" x2="602" y2="724.5" stroke="#ffffff" stroke-width="2" /><path d="M548 724.0h14l-5 5h-4Z" fill="#fff"/><line x1="555" y1="728.5" x2="555" y2="741.5" stroke="#3fd83f" stroke-width="1" /><path d="M552 729.5l3 4 3-4" fill="none" stroke="#3fd83f"/><path d="M566 724.0h14l-5 5h-4Z" fill="#fff"/><line x1="573" y1="728.5" x2="573" y2="741.5" stroke="#3fd83f" stroke-width="1" /><path d="M570 729.5l3 4 3-4" fill="none" stroke="#3fd83f"/><path d="M584 724.0h14l-5 5h-4Z" fill="#fff"/><line x1="591" y1="728.5" x2="591" y2="741.5" stroke="#3fd83f" stroke-width="1" /><path d="M588 729.5l3 4 3-4" fill="none" stroke="#3fd83f"/><path d="M549 734.5h22l-3 6h-14Z" fill="#fff"/><line x1="553" y1="724.5" x2="553" y2="735.5" stroke="#ffffff" stroke-width="1.5" /><rect x="548" y="734.5" width="23" height="8.0" stroke="#ffffff" stroke-width="1" fill="none"/><rect x="602.9" y="699.5" width="18.600000000000023" height="15.0" stroke="#ffffff" stroke-width="1" fill="none"/><rect x="602.9" y="714.5" width="18.600000000000023" height="30.5" stroke="#ffffff" stroke-width="1" fill="none"/><rect x="604.9" y="716.5" width="14.600000000000023" height="27.0" stroke="#ffffff" stroke-width="1" fill="none"/><line x1="618.0" y1="716.5" x2="618.0" y2="743.5" stroke="#ffffff" stroke-width="1" /><line x1="605.9" y1="717.5" x2="617.5" y2="742.5" stroke="#ffffff" stroke-width="1" /><line x1="617.5" y1="717.5" x2="605.9" y2="742.5" stroke="#ffffff" stroke-width="1" /><circle cx="612.7" cy="730.0" r="3.2" stroke="#fff" stroke-width="0.9" fill="none"/><rect x="608.7" y="727.0" width="3.0" height="6.0" stroke="#ffffff" stroke-width="0.9" fill="none"/><line x1="622" y1="717.0" x2="644.5" y2="717.0" stroke="#ffffff" stroke-width="1" /><path d="M640 722.5c2 2 0 6-3 10h-8" fill="none" stroke="#fff" stroke-width="1.5"/><rect x="625" y="735.5" width="19" height="4.0" stroke="#ffffff" stroke-width="1.2" fill="none"/><rect x="653" y="726.5" width="14.5" height="16.5" stroke="#3fd83f" stroke-width="1.5" fill="none"/><rect x="667.5" y="726.5" width="14.5" height="16.5" stroke="#3fd83f" stroke-width="1.5" fill="none"/><rect x="682" y="726.5" width="14.5" height="16.5" stroke="#3fd83f" stroke-width="1.5" fill="none"/><line x1="653" y1="733.5" x2="697" y2="733.5" stroke="#3fd83f" stroke-width="1.5" /><rect x="653" y="739.5" width="44" height="3.0" fill="#3fd83f"/><rect x="653.5" y="717.5" width="6.0" height="20.0" stroke="#ffffff" stroke-width="1.5" fill="none"/><ellipse cx="656" cy="715.5" rx="2.5" ry="2.5" fill="#ffffff"/><line x1="538" y1="753.5" x2="630" y2="753.5" stroke="#3fd83f" stroke-width="1" /><line x1="585" y1="750.5" x2="619" y2="750.5" stroke="#3fd83f" stroke-width="1" /><rect x="547" y="751.5" width="15" height="3.0" fill="#22ff22"/><line x1="559" y1="741.5" x2="559" y2="754.5" stroke="#3fd83f" stroke-width="1" /><line x1="571" y1="741.5" x2="571" y2="754.5" stroke="#3fd83f" stroke-width="1" /><line x1="590" y1="741.5" x2="590" y2="754.5" stroke="#3fd83f" stroke-width="1" /><line x1="606" y1="741.5" x2="606" y2="754.5" stroke="#3fd83f" stroke-width="1" /><line x1="614" y1="741.5" x2="614" y2="754.5" stroke="#3fd83f" stroke-width="1" /><line x1="626" y1="741.5" x2="626" y2="754.5" stroke="#3fd83f" stroke-width="1" /><line x1="655" y1="753.5" x2="770" y2="753.5" stroke="#3fd83f" stroke-width="1" /><line x1="660" y1="750.5" x2="700" y2="750.5" stroke="#3fd83f" stroke-width="1" /><line x1="658" y1="743.5" x2="658" y2="754.5" stroke="#3fd83f" stroke-width="1" /><line x1="674" y1="743.5" x2="674" y2="754.5" stroke="#3fd83f" stroke-width="1" /><line x1="689" y1="743.5" x2="689" y2="754.5" stroke="#3fd83f" stroke-width="1" /><line x1="716" y1="743.5" x2="716" y2="754.5" stroke="#3fd83f" stroke-width="1" /><line x1="727" y1="620.5" x2="790" y2="620.5" stroke="#1a1ab4" stroke-width="2" /><line x1="733" y1="622" x2="772" y2="622" stroke="#ffffff" stroke-width="2.5" /><path d="M736 623h12l-5 5h-2Z" fill="#fff"/><path d="M756 623h12l-5 5h-2Z" fill="#fff"/><path d="M748 631h18l-2 6h-14Z" fill="#fff"/><rect x="742" y="634" width="28" height="7" stroke="#ffffff" stroke-width="1" fill="none"/><line x1="767" y1="620" x2="767" y2="641" stroke="#ffffff" stroke-width="1.5" /><line x1="700" y1="633" x2="836" y2="633" stroke="#1a1ab4" stroke-width="2" /><rect x="776" y="620" width="14" height="5" fill="#1428f0"/><line x1="779.5" y1="620" x2="779.5" y2="638" stroke="#ffffff" stroke-width="1.5" /><path d="M783 622c3 2 5 6 6 9h12v-3h-12" fill="none" stroke="#fff" stroke-width="1.5"/><rect x="783" y="629" width="25" height="12" stroke="#ffffff" stroke-width="1" fill="none"/><line x1="826" y1="621.5" x2="848" y2="621.5" stroke="#ffffff" stroke-width="2.5" /><path d="M831 622l6 4 6-4" fill="none" stroke="#fff" stroke-width="1.3"/><line x1="837.5" y1="626" x2="837.5" y2="641" stroke="#22ff22" stroke-width="2" /><line x1="700" y1="655" x2="740" y2="655" stroke="#3fd83f" stroke-width="1" /><line x1="780" y1="651" x2="836" y2="651" stroke="#3fd83f" stroke-width="2" /><line x1="790" y1="655" x2="836" y2="655" stroke="#3fd83f" stroke-width="1" /><line x1="838" y1="651" x2="847" y2="651" stroke="#3fd83f" stroke-width="1" /><path d="M704 641h7l-3.5 4Z" fill="none" stroke="#3fd83f"/><line x1="707.5" y1="645" x2="707.5" y2="660" stroke="#3fd83f" stroke-width="1" /><line x1="753" y1="640" x2="753" y2="660" stroke="#3fd83f" stroke-width="2" /><line x1="758" y1="640" x2="758" y2="660" stroke="#3fd83f" stroke-width="1" /><rect x="752" y="655" width="18" height="5" fill="#22ff22"/><line x1="783" y1="645" x2="783" y2="655" stroke="#3fd83f" stroke-width="1" /><line x1="799" y1="641" x2="799" y2="655" stroke="#3fd83f" stroke-width="1.5" /><path d="M816 641h7l-3.5 4Z" fill="none" stroke="#3fd83f"/><line x1="819.5" y1="645" x2="819.5" y2="652" stroke="#3fd83f" stroke-width="1" /><line x1="541" y1="722.5" x2="541" y2="737.5" stroke="#1a1ab4" stroke-width="1.5" /><line x1="773" y1="722.5" x2="773" y2="737.5" stroke="#1a1ab4" stroke-width="1.5" /><line x1="540" y1="737.5" x2="773" y2="737.5" stroke="#1a1ab4" stroke-width="1.5" /><line x1="540" y1="722.5" x2="602" y2="722.5" stroke="#1a1ab4" stroke-width="1.5" /><line x1="660" y1="722.5" x2="692" y2="722.5" stroke="#1a1ab4" stroke-width="1.5" /><line x1="726" y1="722.5" x2="773" y2="722.5" stroke="#1a1ab4" stroke-width="2" /><ellipse cx="748" cy="725" rx="6" ry="2" fill="#1428f0"/><ellipse cx="764" cy="724" rx="5" ry="2.5" fill="#1428f0"/><path d="M745 733h22l-3 6h-15Z" fill="#fff"/><rect x="740" y="735" width="30" height="8.5" stroke="#ffffff" stroke-width="1" fill="none"/><path d="M767 722c-2 4-3 8-5 12" fill="none" stroke="#fff" stroke-width="1.5"/><rect x="753" y="752" width="17" height="4" fill="#22ff22"/><line x1="758" y1="743" x2="758" y2="754" stroke="#3fd83f" stroke-width="2" /><path d="M702 743h7l-3.5 4Z" fill="none" stroke="#3fd83f"/><line x1="705.5" y1="747" x2="705.5" y2="754" stroke="#3fd83f" stroke-width="1" /></g></svg>
<svg style="position:absolute;left:1778px;top:259px;" width="52" height="52" viewBox="0 0 52 52"><defs><linearGradient id="vc" x1="0" y1="0" x2="0" y2="1"><stop offset="0" stop-color="#737373"/><stop offset="0.5" stop-color="#6a6a6a"/><stop offset="0.5" stop-color="#606060"/><stop offset="1" stop-color="#5b5b5b"/></linearGradient></defs><rect x="0" y="0" width="52" height="51" fill="url(#vc)"/><rect x="0" y="0" width="52" height="2" fill="#80808a"/><rect x="10" y="10" width="32" height="32" fill="#000" opacity="0.05"/><text x="26" y="37" font-size="28" text-anchor="middle" fill="#4a4a4a" font-family="Liberation Serif, serif">前</text></svg>
<svg style="position:absolute;left:1730px;top:306px;" width="148" height="18" viewBox="0 0 148 18"><ellipse cx="74" cy="8.5" rx="70" ry="5.5" fill="none" stroke="#666" stroke-width="2.2"/><ellipse cx="74" cy="8.5" rx="62" ry="3.5" fill="none" stroke="#2a2a2a" stroke-width="1"/></svg>
<div style="position:absolute;left:212px;top:998px;width:1699px;height:16px;background:#f0f0f0"></div>
<svg style="position:absolute;left:216px;top:175px;" width="17" height="16" viewBox="0 0 17 16"><path d="M1 7L8 1l7 4v7l-6 3-8-3Z" fill="#e8ebef" stroke="#444" stroke-width="1.1"/><path d="M1 7l8 3 6-5M9 10v5" stroke="#444" fill="none"/><rect x="3" y="9" width="2" height="4.5" fill="#333"/><path d="M9 10l6-5v7l-6 3Z" fill="#c9ced6" stroke="#444" stroke-width="0.9"/></svg>
<svg style="position:absolute;left:325px;top:178px;" width="10" height="10" viewBox="0 0 10 10"><path d="M0.5 0.5l9 9M9.5 0.5l-9 9" stroke="#222" stroke-width="1.5"/></svg>
<svg style="position:absolute;left:1900px;top:179px;" width="11" height="10" viewBox="0 0 11 10"><path d="M0.5 1h8" stroke="#333" stroke-width="1.6"/><path d="M0 3.5h9L4.5 8Z" fill="#333"/></svg>
<svg style="position:absolute;left:1898px;top:201px;" width="9" height="7" viewBox="0 0 9 7"><path d="M1 6l3.5-4 3.5 4" fill="none" stroke="#444" stroke-width="1.6"/></svg>
<svg style="position:absolute;left:1898px;top:986px;" width="9" height="7" viewBox="0 0 9 7"><path d="M1 1l3.5 4 3.5-4" fill="none" stroke="#444" stroke-width="1.6"/></svg>
<div style="position:absolute;left:1895px;top:588px;width:16px;height:16px;background:#cdcdcd"></div>
<div style="position:absolute;left:1899px;top:858px;width:9px;height:60px;background:linear-gradient(90deg,rgba(0,0,0,0.06),rgba(0,0,0,0.0))"></div>
<div style="position:absolute;left:1901px;top:858px;width:7px;height:57px;background:#9a9a9a;border-radius:3.5px"></div>
<div style="position:absolute;left:1901px;top:886px;width:7px;height:29px;background:#3dd06a;border-radius:0 0 3.5px 3.5px"></div>
<div style="position:absolute;left:1901px;top:886px;width:7px;height:10px;background:#27b856"></div>
<div class="t" style="left:234px;top:997.5px;font-size:12px;line-height:16px;color:#111;letter-spacing:1.1px">1 : 100</div>
<svg style="position:absolute;left:1883px;top:1002px;" width="7" height="9" viewBox="0 0 7 9"><path d="M1 1l4 3.5L1 8" fill="none" stroke="#444" stroke-width="1.7"/></svg>
<svg style="position:absolute;left:1899px;top:1003px;" width="10" height="10" viewBox="0 0 10 10"><rect x="7" y="0" width="2" height="2" fill="#999"/><rect x="4" y="3" width="2" height="2" fill="#999"/><rect x="7" y="3" width="2" height="2" fill="#999"/><rect x="1" y="6" width="2" height="2" fill="#999"/><rect x="4" y="6" width="2" height="2" fill="#999"/><rect x="7" y="6" width="2" height="2" fill="#999"/></svg>
<div style="position:absolute;left:1220px;top:999px;width:17px;height:14px;background:#cdcdcd"></div>
<svg style="position:absolute;left:568px;top:1001px;" width="7" height="9" viewBox="0 0 7 9"><path d="M6 1L2 4.5 6 8" fill="none" stroke="#444" stroke-width="1.7"/></svg>
<svg style="position:absolute;left:293px;top:998px;" width="16" height="15" viewBox="0 0 16 15"><rect x="0.5" y="1.5" width="15" height="11" fill="#e4e8ee" stroke="#333"/></svg>
<svg style="position:absolute;left:315px;top:998px;" width="16" height="15" viewBox="0 0 16 15"><path d="M1 5l4-4h10v8l-4 4H1Z" fill="#fff" stroke="#333"/><path d="M1 5h10v8M11 5l4-4M1 9h10" fill="none" stroke="#333"/></svg>
<svg style="position:absolute;left:335px;top:998px;" width="16" height="15" viewBox="0 0 16 15"><circle cx="6" cy="6" r="4.5" fill="none" stroke="#aaa" stroke-dasharray="2 1.5"/><path d="M9 9l5 5M14 9l-5 5" stroke="#bbb" stroke-width="2"/></svg>
<svg style="position:absolute;left:358px;top:998px;" width="16" height="15" viewBox="0 0 16 15"><circle cx="6" cy="6" r="4.5" fill="none" stroke="#aaa" stroke-dasharray="2 1.5"/><path d="M9 9l5 5M14 9l-5 5" stroke="#bbb" stroke-width="2"/></svg>
<svg style="position:absolute;left:377px;top:998px;" width="16" height="15" viewBox="0 0 16 15"><path d="M1 8h4V3h9" fill="none" stroke="#2f6fb5" stroke-width="2"/><path d="M8 8l6 6M14 8l-6 6" stroke="#d0702a" stroke-width="2"/></svg>
<svg style="position:absolute;left:400px;top:998px;" width="16" height="15" viewBox="0 0 16 15"><path d="M1 8h4V3h9" fill="none" stroke="#2f6fb5" stroke-width="2"/><circle cx="12" cy="8" r="3" fill="#fff" stroke="#2f6fb5" stroke-width="1.4"/><rect x="11" y="11" width="2" height="3" fill="#2f6fb5"/></svg>
<svg style="position:absolute;left:418px;top:998px;" width="16" height="15" viewBox="0 0 16 15"><path d="M1 7l7-6 7 6v7H1Z" fill="#fff" stroke="#333"/><rect x="8" y="9" width="7" height="5" fill="#4a7bbd"/></svg>
<svg style="position:absolute;left:439px;top:998px;" width="16" height="15" viewBox="0 0 16 15"><path d="M1 6c2 0 3 5 6 5s3-5 5-5 3 1 3 3" fill="none" stroke="#333" stroke-width="1.2"/><ellipse cx="11" cy="8" rx="3" ry="2" fill="#aad" stroke="#333"/></svg>
<svg style="position:absolute;left:463px;top:998px;" width="16" height="15" viewBox="0 0 16 15"><circle cx="5" cy="6" r="3.2" fill="#fff" stroke="#2f6fb5" stroke-width="1.3"/><rect x="4" y="9" width="2" height="3" fill="#2f6fb5"/></svg>
<svg style="position:absolute;left:482px;top:998px;" width="16" height="15" viewBox="0 0 16 15"><rect x="1" y="3" width="13" height="10" fill="#fff" stroke="#222" stroke-width="1.3" stroke-dasharray="3 1"/><circle cx="10" cy="10" r="2" fill="none" stroke="#222"/></svg>
<svg style="position:absolute;left:503px;top:998px;" width="16" height="15" viewBox="0 0 16 15"><path d="M1 14V5l6-4 7 4v9" fill="none" stroke="#333"/><path d="M3 6v8M6 4v10M9 4v10" stroke="#a33"/><circle cx="12" cy="8" r="3" fill="#f6c344"/></svg>
<svg style="position:absolute;left:524px;top:998px;" width="16" height="15" viewBox="0 0 16 15"><path d="M1 5l4-3h9v9l-4 3H1Z" fill="#ddd" stroke="#444"/><path d="M1 5h9v9M10 5l4-3" fill="none" stroke="#444"/></svg>
<svg style="position:absolute;left:545px;top:998px;" width="16" height="15" viewBox="0 0 16 15"><path d="M1 1v13M15 1v4M1 2h14" stroke="#333" stroke-width="1.2"/><path d="M1 9h6" stroke="#333" stroke-dasharray="1.5 1.5"/><rect x="9" y="9" width="6" height="5" fill="#555"/></svg>
<div style="position:absolute;left:0px;top:1014px;width:1911px;height:1px;background:#ffffff"></div>
<div style="position:absolute;left:0px;top:1015px;width:1911px;height:2px;background:#c8c8c8"></div>
</body></html>
